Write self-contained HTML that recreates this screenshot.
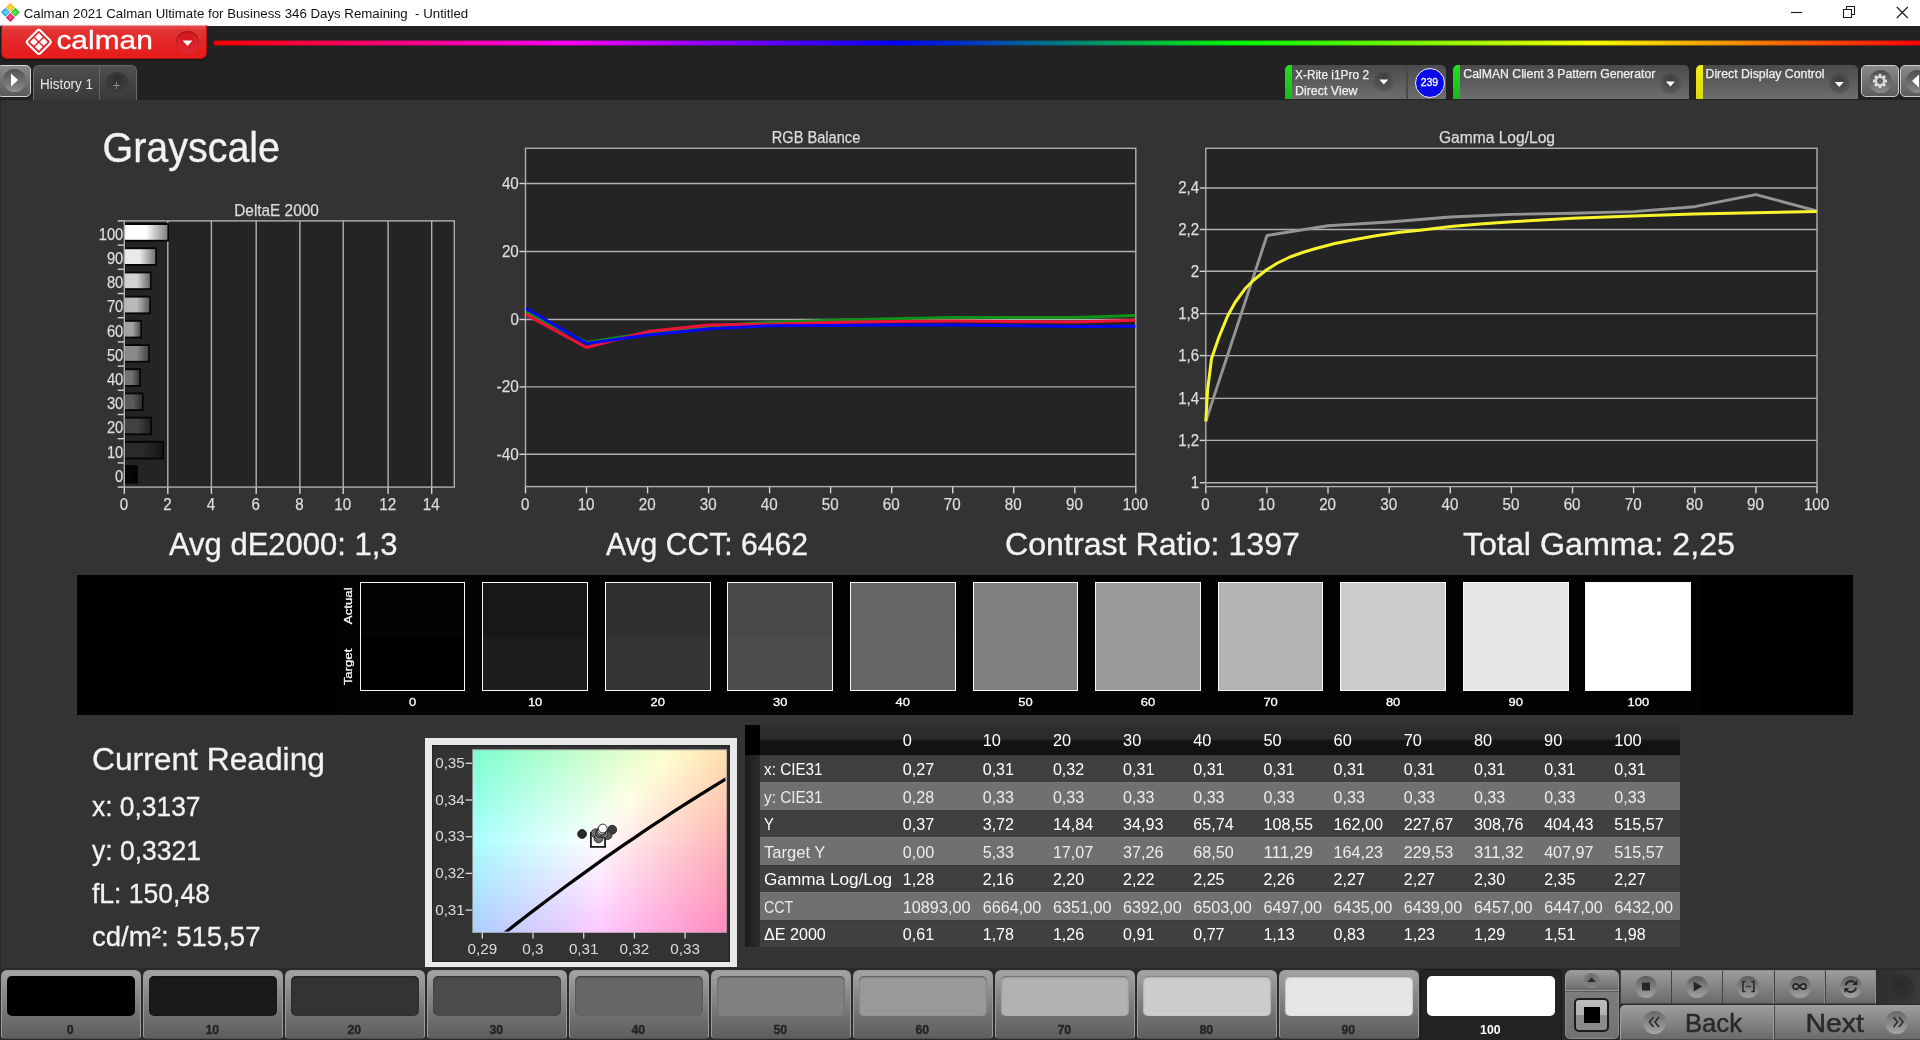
<!DOCTYPE html>
<html lang="en"><head><meta charset="utf-8"><title>Calman 2021 Calman Ultimate for Business - Untitled</title>
<style>
html,body{margin:0;padding:0;background:#333;overflow:hidden}
body{width:1920px;height:1040px;position:relative;font-family:"Liberation Sans", sans-serif;}
#app{position:absolute;left:0;top:0;width:1920px;height:1040px;overflow:hidden;background:#333333}
#app div{position:absolute;box-sizing:border-box}
#ov{position:absolute;left:0;top:0;width:1920px;height:1040px;font-family:"Liberation Sans", sans-serif;will-change:transform}
#ov text{white-space:pre}
</style></head><body>
<div id="app">
<div style="left:0px;top:0px;width:1920px;height:25.5px;background:#ffffff"></div>
<div style="left:0px;top:25.5px;width:1920px;height:74.5px;background:#222222"></div>
<div style="left:0.5px;top:25.3px;width:206.5px;height:33.6px;background:linear-gradient(#e64a4a 0%,#e33535 12%,#e52727 50%,#e81a1a 100%);border-radius:0 0 6px 6px;border:1px solid #b01016;border-top:1px solid #f0a0a0;box-shadow:0 1px 2px rgba(0,0,0,.6)"></div>
<div style="left:176px;top:31px;width:23px;height:23px;border-radius:50%;background:radial-gradient(circle at 50% 35%,#d0141a,#e8333a);box-shadow:inset 0 1px 2px rgba(90,0,0,.6)"></div>
<div style="left:214px;top:39.6px;width:1706px;height:6.4px;background:linear-gradient(90deg,#ff0000 0%,#ff00ff 21%,#0000ff 40%,#00ff00 60%,#ffff00 81%,#ff0000 100%);border-radius:2px 0 0 2px"></div>
<div style="left:214px;top:39.6px;width:1706px;height:6.4px;background:linear-gradient(rgba(34,34,34,.85),rgba(34,34,34,0) 28%,rgba(34,34,34,0) 72%,rgba(34,34,34,.85))"></div>
<div style="left:-3px;top:65px;width:34px;height:32px;background:linear-gradient(#8a8a8a,#5a5a5a);border:1.4px solid #d4d4d4;border-radius:5px"></div>
<div style="left:3px;top:69px;width:23px;height:23px;border-radius:50%;background:linear-gradient(#525252,#747474 60%,#909090)"></div>
<div style="left:33px;top:65px;width:104.3px;height:35px;background:linear-gradient(#505050,#434343 50%,#3a3a3a);border:1.5px solid #6a6a6a;border-bottom:none;border-radius:6px 6px 0 0"></div>
<div style="left:98.8px;top:66px;width:1.5px;height:34px;background:#626262"></div>
<div style="left:105px;top:72px;width:24px;height:24px;border-radius:50%;background:radial-gradient(circle at 50% 30%,#303030,#454545)"></div>
<div style="left:1285px;top:65px;width:161px;height:34.2px;background:linear-gradient(#4b4b4b 0%,#5a5a5a 45%,#6e6e6e 100%);border-radius:5px 5px 0 0"></div>
<div style="left:1285px;top:65px;width:7px;height:34.2px;background:linear-gradient(#22e022,#18b818);border-radius:5px 0 0 0"></div>
<div style="left:1373.3px;top:70.5px;width:21px;height:21px;border-radius:50%;background:radial-gradient(circle at 50% 30%,#3e3e3e,#646464)"></div>
<div style="left:1406px;top:68px;width:1.5px;height:31.2px;background:#4a4a4a"></div>
<div style="left:1414.5px;top:67.5px;width:30px;height:30px;border-radius:50%;background:#0a0ae6;border:1.5px solid #f0f0f8"></div>
<div style="left:1453px;top:65px;width:236px;height:34.2px;background:linear-gradient(#4b4b4b 0%,#5a5a5a 45%,#6e6e6e 100%);border-radius:5px 5px 0 0"></div>
<div style="left:1453px;top:65px;width:7px;height:34.2px;background:linear-gradient(#22e022,#18b818);border-radius:5px 0 0 0"></div>
<div style="left:1659.9px;top:72.5px;width:21px;height:21px;border-radius:50%;background:radial-gradient(circle at 50% 30%,#3e3e3e,#646464)"></div>
<div style="left:1696px;top:65px;width:161.5px;height:34.2px;background:linear-gradient(#4b4b4b 0%,#5a5a5a 45%,#6e6e6e 100%);border-radius:5px 5px 0 0"></div>
<div style="left:1696px;top:65px;width:7px;height:34.2px;background:linear-gradient(#f0f018,#d8d810);border-radius:5px 0 0 0"></div>
<div style="left:1828.7px;top:72.9px;width:21px;height:21px;border-radius:50%;background:radial-gradient(circle at 50% 30%,#3e3e3e,#646464)"></div>
<div style="left:1861px;top:65px;width:38.2px;height:32px;background:linear-gradient(#8a8a8a,#5c5c5c);border:1.3px solid #cccccc;border-radius:5px"></div>
<div style="left:1868.5px;top:69.5px;width:23px;height:23px;border-radius:50%;background:linear-gradient(#4e4e4e,#6e6e6e 60%,#8c8c8c)"></div>
<div style="left:1899.8px;top:65px;width:30px;height:32px;background:linear-gradient(#8a8a8a,#5c5c5c);border:1.3px solid #cccccc;border-radius:5px"></div>
<div style="left:1906px;top:69.5px;width:23px;height:23px;border-radius:50%;background:linear-gradient(#4e4e4e,#6e6e6e 60%,#8c8c8c)"></div>
<div style="left:0px;top:100px;width:1px;height:868px;background:#2b2b2b"></div>
<div style="left:124px;top:221px;width:331px;height:266px;background:#242424"></div>
<div style="left:525px;top:148px;width:611px;height:339px;background:#242424"></div>
<div style="left:1205px;top:148px;width:612px;height:339px;background:#242424"></div>
<div style="left:77px;top:575.4px;width:1776px;height:139.3px;background:#000000"></div>
<div style="left:338px;top:575.4px;width:1362px;height:137.5px;background:#020202"></div>
<div style="left:359.6px;top:581.9px;width:105.8px;height:109.2px;border:1.8px solid #f8f8f8;background:linear-gradient(#030305 0%,#030305 50%,#000000 50%,#000000 100%)"></div>
<div style="left:482.2px;top:581.9px;width:105.8px;height:109.2px;border:1.8px solid #f8f8f8;background:linear-gradient(#171717 0%,#171717 50%,#1c1c1c 50%,#1c1c1c 100%)"></div>
<div style="left:604.8px;top:581.9px;width:105.8px;height:109.2px;border:1.8px solid #f8f8f8;background:linear-gradient(#313031 0%,#313031 50%,#343434 50%,#343434 100%)"></div>
<div style="left:727.3px;top:581.9px;width:105.8px;height:109.2px;border:1.8px solid #f8f8f8;background:linear-gradient(#4a4a4a 0%,#4a4a4a 50%,#4d4d4d 50%,#4d4d4d 100%)"></div>
<div style="left:849.9px;top:581.9px;width:105.8px;height:109.2px;border:1.8px solid #f8f8f8;background:linear-gradient(#656565 0%,#656565 50%,#676767 50%,#676767 100%)"></div>
<div style="left:972.5px;top:581.9px;width:105.8px;height:109.2px;border:1.8px solid #f8f8f8;background:linear-gradient(#808080 0%,#808080 50%,#818181 50%,#818181 100%)"></div>
<div style="left:1095.1px;top:581.9px;width:105.8px;height:109.2px;border:1.8px solid #f8f8f8;background:linear-gradient(#999999 0%,#999999 50%,#9a9a9a 50%,#9a9a9a 100%)"></div>
<div style="left:1217.7px;top:581.9px;width:105.8px;height:109.2px;border:1.8px solid #f8f8f8;background:linear-gradient(#b3b3b1 0%,#b3b3b1 50%,#b3b3b3 50%,#b3b3b3 100%)"></div>
<div style="left:1340.2px;top:581.9px;width:105.8px;height:109.2px;border:1.8px solid #f8f8f8;background:linear-gradient(#cccccb 0%,#cccccb 50%,#cccccc 50%,#cccccc 100%)"></div>
<div style="left:1462.8px;top:581.9px;width:105.8px;height:109.2px;border:1.8px solid #f8f8f8;background:linear-gradient(#e5e6e4 0%,#e5e6e4 50%,#e6e6e6 50%,#e6e6e6 100%)"></div>
<div style="left:1585.4px;top:581.9px;width:105.8px;height:109.2px;border:1.8px solid #f8f8f8;background:linear-gradient(#fffffd 0%,#fffffd 50%,#ffffff 50%,#ffffff 100%)"></div>
<div style="left:425px;top:738px;width:312px;height:229px;background:#e9e9e9"></div>
<div style="left:432px;top:745px;width:298px;height:217px;background:#333333;box-shadow:inset 0 0 2px #000"></div>
<div style="left:472px;top:749.2px;width:255.4px;height:183.6px;background:#8c8c8c"></div>
<div style="left:745px;top:725px;width:935px;height:29.5px;background:linear-gradient(#2e2e2e 0%,#2a2a2a 48%,#141414 50%,#101010 100%)"></div>
<div style="left:745px;top:725px;width:15px;height:29.5px;background:#000000"></div>
<div style="left:760px;top:754.5px;width:920px;height:27.5px;background:#404040;border-top:1px solid #3a3a3a"></div>
<div style="left:745px;top:754.5px;width:15px;height:27.5px;background:linear-gradient(90deg,#1c1c1c,#2c2c2c)"></div>
<div style="left:760px;top:782.0px;width:920px;height:27.5px;background:#707070;border-top:1px solid #787878"></div>
<div style="left:745px;top:782.0px;width:15px;height:27.5px;background:linear-gradient(90deg,#1c1c1c,#2c2c2c)"></div>
<div style="left:760px;top:809.5px;width:920px;height:27.5px;background:#404040;border-top:1px solid #3a3a3a"></div>
<div style="left:745px;top:809.5px;width:15px;height:27.5px;background:linear-gradient(90deg,#1c1c1c,#2c2c2c)"></div>
<div style="left:760px;top:837.0px;width:920px;height:27.5px;background:#707070;border-top:1px solid #787878"></div>
<div style="left:745px;top:837.0px;width:15px;height:27.5px;background:linear-gradient(90deg,#1c1c1c,#2c2c2c)"></div>
<div style="left:760px;top:864.5px;width:920px;height:27.5px;background:#404040;border-top:1px solid #3a3a3a"></div>
<div style="left:745px;top:864.5px;width:15px;height:27.5px;background:linear-gradient(90deg,#1c1c1c,#2c2c2c)"></div>
<div style="left:760px;top:892.0px;width:920px;height:27.5px;background:#707070;border-top:1px solid #787878"></div>
<div style="left:745px;top:892.0px;width:15px;height:27.5px;background:linear-gradient(90deg,#1c1c1c,#2c2c2c)"></div>
<div style="left:760px;top:919.5px;width:920px;height:27.5px;background:#404040;border-top:1px solid #3a3a3a"></div>
<div style="left:745px;top:919.5px;width:15px;height:27.5px;background:linear-gradient(90deg,#1c1c1c,#2c2c2c)"></div>
<div style="left:0px;top:968px;width:1920px;height:72px;background:#2a2a2a"></div>
<div style="left:1.3px;top:970px;width:140.2px;height:68.8px;background:linear-gradient(#a4a4a4 0%,#8c8c8c 30%,#6c6c6c 75%,#5e5e5e 100%);border-radius:6px 6px 4px 4px;border:1px solid #9c9c9c;border-bottom-color:#4c4c4c"></div>
<div style="left:7.0px;top:975.6px;width:128.4px;height:40.5px;background:rgb(0,0,0);border-radius:5px;box-shadow:inset 0 1px 2px rgba(0,0,0,.45),0 0 1px rgba(255,255,255,.25)"></div>
<div style="left:143.3px;top:970px;width:140.2px;height:68.8px;background:linear-gradient(#a4a4a4 0%,#8c8c8c 30%,#6c6c6c 75%,#5e5e5e 100%);border-radius:6px 6px 4px 4px;border:1px solid #9c9c9c;border-bottom-color:#4c4c4c"></div>
<div style="left:149.0px;top:975.6px;width:128.4px;height:40.5px;background:rgb(26,26,26);border-radius:5px;box-shadow:inset 0 1px 2px rgba(0,0,0,.45),0 0 1px rgba(255,255,255,.25)"></div>
<div style="left:285.3px;top:970px;width:140.2px;height:68.8px;background:linear-gradient(#a4a4a4 0%,#8c8c8c 30%,#6c6c6c 75%,#5e5e5e 100%);border-radius:6px 6px 4px 4px;border:1px solid #9c9c9c;border-bottom-color:#4c4c4c"></div>
<div style="left:291.0px;top:975.6px;width:128.4px;height:40.5px;background:rgb(51,51,51);border-radius:5px;box-shadow:inset 0 1px 2px rgba(0,0,0,.45),0 0 1px rgba(255,255,255,.25)"></div>
<div style="left:427.3px;top:970px;width:140.2px;height:68.8px;background:linear-gradient(#a4a4a4 0%,#8c8c8c 30%,#6c6c6c 75%,#5e5e5e 100%);border-radius:6px 6px 4px 4px;border:1px solid #9c9c9c;border-bottom-color:#4c4c4c"></div>
<div style="left:433.0px;top:975.6px;width:128.4px;height:40.5px;background:rgb(76,76,76);border-radius:5px;box-shadow:inset 0 1px 2px rgba(0,0,0,.45),0 0 1px rgba(255,255,255,.25)"></div>
<div style="left:569.3px;top:970px;width:140.2px;height:68.8px;background:linear-gradient(#a4a4a4 0%,#8c8c8c 30%,#6c6c6c 75%,#5e5e5e 100%);border-radius:6px 6px 4px 4px;border:1px solid #9c9c9c;border-bottom-color:#4c4c4c"></div>
<div style="left:575.0px;top:975.6px;width:128.4px;height:40.5px;background:rgb(102,102,102);border-radius:5px;box-shadow:inset 0 1px 2px rgba(0,0,0,.45),0 0 1px rgba(255,255,255,.25)"></div>
<div style="left:711.3px;top:970px;width:140.2px;height:68.8px;background:linear-gradient(#a4a4a4 0%,#8c8c8c 30%,#6c6c6c 75%,#5e5e5e 100%);border-radius:6px 6px 4px 4px;border:1px solid #9c9c9c;border-bottom-color:#4c4c4c"></div>
<div style="left:717.0px;top:975.6px;width:128.4px;height:40.5px;background:rgb(128,128,128);border-radius:5px;box-shadow:inset 0 1px 2px rgba(0,0,0,.45),0 0 1px rgba(255,255,255,.25)"></div>
<div style="left:853.3px;top:970px;width:140.2px;height:68.8px;background:linear-gradient(#a4a4a4 0%,#8c8c8c 30%,#6c6c6c 75%,#5e5e5e 100%);border-radius:6px 6px 4px 4px;border:1px solid #9c9c9c;border-bottom-color:#4c4c4c"></div>
<div style="left:859.0px;top:975.6px;width:128.4px;height:40.5px;background:rgb(153,153,153);border-radius:5px;box-shadow:inset 0 1px 2px rgba(0,0,0,.45),0 0 1px rgba(255,255,255,.25)"></div>
<div style="left:995.3px;top:970px;width:140.2px;height:68.8px;background:linear-gradient(#a4a4a4 0%,#8c8c8c 30%,#6c6c6c 75%,#5e5e5e 100%);border-radius:6px 6px 4px 4px;border:1px solid #9c9c9c;border-bottom-color:#4c4c4c"></div>
<div style="left:1001.0px;top:975.6px;width:128.4px;height:40.5px;background:rgb(178,178,178);border-radius:5px;box-shadow:inset 0 1px 2px rgba(0,0,0,.45),0 0 1px rgba(255,255,255,.25)"></div>
<div style="left:1137.3px;top:970px;width:140.2px;height:68.8px;background:linear-gradient(#a4a4a4 0%,#8c8c8c 30%,#6c6c6c 75%,#5e5e5e 100%);border-radius:6px 6px 4px 4px;border:1px solid #9c9c9c;border-bottom-color:#4c4c4c"></div>
<div style="left:1143.0px;top:975.6px;width:128.4px;height:40.5px;background:rgb(204,204,204);border-radius:5px;box-shadow:inset 0 1px 2px rgba(0,0,0,.45),0 0 1px rgba(255,255,255,.25)"></div>
<div style="left:1279.3px;top:970px;width:140.2px;height:68.8px;background:linear-gradient(#a4a4a4 0%,#8c8c8c 30%,#6c6c6c 75%,#5e5e5e 100%);border-radius:6px 6px 4px 4px;border:1px solid #9c9c9c;border-bottom-color:#4c4c4c"></div>
<div style="left:1285.0px;top:975.6px;width:128.4px;height:40.5px;background:rgb(230,230,230);border-radius:5px;box-shadow:inset 0 1px 2px rgba(0,0,0,.45),0 0 1px rgba(255,255,255,.25)"></div>
<div style="left:1420.3px;top:969px;width:142px;height:72px;background:#232323;border-radius:6px 6px 0 0;border:1px solid #1a1a1a;border-bottom:none"></div>
<div style="left:1427.0px;top:975.6px;width:128.4px;height:40.5px;background:#ffffff;border-radius:5px"></div>
<div style="left:1565px;top:970px;width:54px;height:21px;background:linear-gradient(#9c9c9c 0%,#868686 45%,#6a6a6a 100%);border-radius:6px 6px 0 0;border:1px solid #989898"></div>
<div style="left:1583px;top:972.5px;width:17px;height:15px;border-radius:50%;background:radial-gradient(circle at 50% 30%,#6c6c6c,#8a8a8a)"></div>
<div style="left:1565px;top:991px;width:54px;height:48px;background:linear-gradient(#7c7c7c,#727272);border:1px solid #8a8a8a;border-top:1px solid #5a5a5a;border-radius:0 0 5px 5px"></div>
<div style="left:1574px;top:998px;width:35px;height:34px;background:linear-gradient(#bdbdbd 0%,#b0b0b0 49%,#8e8e8e 50%,#8a8a8a 100%);border:2px solid #1c1c1c;border-radius:5px"></div>
<div style="left:1583.5px;top:1007px;width:16px;height:16px;background:#000000"></div>
<div style="left:1620.0px;top:970px;width:51.5px;height:34px;background:linear-gradient(#9c9c9c 0%,#868686 45%,#6a6a6a 100%);border:1px solid #8c8c8c;border-left-color:#444444;border-right-color:#8e8e8e;border-bottom-color:#4a4a4a"></div>
<div style="left:1635.0px;top:975.5px;width:22px;height:22px;border-radius:50%;background:linear-gradient(#5c5c5c,#8a8a8a 65%,#a2a2a2)"></div>
<div style="left:1671.2px;top:970px;width:51.5px;height:34px;background:linear-gradient(#9c9c9c 0%,#868686 45%,#6a6a6a 100%);border:1px solid #8c8c8c;border-left-color:#444444;border-right-color:#8e8e8e;border-bottom-color:#4a4a4a"></div>
<div style="left:1686.2px;top:975.5px;width:22px;height:22px;border-radius:50%;background:linear-gradient(#5c5c5c,#8a8a8a 65%,#a2a2a2)"></div>
<div style="left:1722.4px;top:970px;width:51.5px;height:34px;background:linear-gradient(#9c9c9c 0%,#868686 45%,#6a6a6a 100%);border:1px solid #8c8c8c;border-left-color:#444444;border-right-color:#8e8e8e;border-bottom-color:#4a4a4a"></div>
<div style="left:1737.4px;top:975.5px;width:22px;height:22px;border-radius:50%;background:linear-gradient(#5c5c5c,#8a8a8a 65%,#a2a2a2)"></div>
<div style="left:1773.6px;top:970px;width:51.5px;height:34px;background:linear-gradient(#9c9c9c 0%,#868686 45%,#6a6a6a 100%);border:1px solid #8c8c8c;border-left-color:#444444;border-right-color:#8e8e8e;border-bottom-color:#4a4a4a"></div>
<div style="left:1788.6px;top:975.5px;width:22px;height:22px;border-radius:50%;background:linear-gradient(#5c5c5c,#8a8a8a 65%,#a2a2a2)"></div>
<div style="left:1824.8px;top:970px;width:51.5px;height:34px;background:linear-gradient(#9c9c9c 0%,#868686 45%,#6a6a6a 100%);border:1px solid #8c8c8c;border-left-color:#444444;border-right-color:#8e8e8e;border-bottom-color:#4a4a4a"></div>
<div style="left:1839.8px;top:975.5px;width:22px;height:22px;border-radius:50%;background:linear-gradient(#5c5c5c,#8a8a8a 65%,#a2a2a2)"></div>
<div style="left:1876px;top:970px;width:44px;height:34px;background:linear-gradient(90deg,#2e2e2e,#3a3a3a)"></div>
<div style="left:1889px;top:975px;width:25px;height:25px;border-radius:50%;background:radial-gradient(circle at 50% 40%,#2a2a2a,#353535)"></div>
<div style="left:1620px;top:1005px;width:154px;height:35px;background:linear-gradient(#9c9c9c 0%,#868686 45%,#6a6a6a 100%);border:1px solid #a0a0a0;border-radius:5px 0 0 0;border-bottom-color:#4a4a4a"></div>
<div style="left:1774px;top:1005px;width:150px;height:35px;background:linear-gradient(#9c9c9c 0%,#868686 45%,#6a6a6a 100%);border:1px solid #a0a0a0;border-left-color:#444444;border-bottom-color:#4a4a4a"></div>
<div style="left:1643px;top:1010.5px;width:23px;height:23px;border-radius:50%;background:linear-gradient(#686868,#909090 65%,#a6a6a6)"></div>
<div style="left:1885px;top:1010.5px;width:23px;height:23px;border-radius:50%;background:linear-gradient(#686868,#909090 65%,#a6a6a6)"></div>
<svg id="ov" width="1920" height="1040" viewBox="0 0 1920 1040">
<defs>
<linearGradient id="bar100" x1="0" x2="1" y1="0" y2="0"><stop offset="0" stop-color="rgb(247,247,247)"/><stop offset="0.12" stop-color="rgb(255,255,255)"/><stop offset="0.5" stop-color="rgb(255,255,255)"/><stop offset="1" stop-color="rgb(128,128,128)"/></linearGradient>
<linearGradient id="bar90" x1="0" x2="1" y1="0" y2="0"><stop offset="0" stop-color="rgb(227,227,227)"/><stop offset="0.12" stop-color="rgb(234,234,234)"/><stop offset="0.5" stop-color="rgb(234,234,234)"/><stop offset="1" stop-color="rgb(117,117,117)"/></linearGradient>
<linearGradient id="bar80" x1="0" x2="1" y1="0" y2="0"><stop offset="0" stop-color="rgb(204,204,204)"/><stop offset="0.12" stop-color="rgb(210,210,210)"/><stop offset="0.5" stop-color="rgb(210,210,210)"/><stop offset="1" stop-color="rgb(105,105,105)"/></linearGradient>
<linearGradient id="bar70" x1="0" x2="1" y1="0" y2="0"><stop offset="0" stop-color="rgb(180,180,180)"/><stop offset="0.12" stop-color="rgb(186,186,186)"/><stop offset="0.5" stop-color="rgb(186,186,186)"/><stop offset="1" stop-color="rgb(93,93,93)"/></linearGradient>
<linearGradient id="bar60" x1="0" x2="1" y1="0" y2="0"><stop offset="0" stop-color="rgb(157,157,157)"/><stop offset="0.12" stop-color="rgb(162,162,162)"/><stop offset="0.5" stop-color="rgb(162,162,162)"/><stop offset="1" stop-color="rgb(81,81,81)"/></linearGradient>
<linearGradient id="bar50" x1="0" x2="1" y1="0" y2="0"><stop offset="0" stop-color="rgb(134,134,134)"/><stop offset="0.12" stop-color="rgb(138,138,138)"/><stop offset="0.5" stop-color="rgb(138,138,138)"/><stop offset="1" stop-color="rgb(69,69,69)"/></linearGradient>
<linearGradient id="bar40" x1="0" x2="1" y1="0" y2="0"><stop offset="0" stop-color="rgb(111,111,111)"/><stop offset="0.12" stop-color="rgb(114,114,114)"/><stop offset="0.5" stop-color="rgb(114,114,114)"/><stop offset="1" stop-color="rgb(57,57,57)"/></linearGradient>
<linearGradient id="bar30" x1="0" x2="1" y1="0" y2="0"><stop offset="0" stop-color="rgb(87,87,87)"/><stop offset="0.12" stop-color="rgb(90,90,90)"/><stop offset="0.5" stop-color="rgb(90,90,90)"/><stop offset="1" stop-color="rgb(45,45,45)"/></linearGradient>
<linearGradient id="bar20" x1="0" x2="1" y1="0" y2="0"><stop offset="0" stop-color="rgb(64,64,64)"/><stop offset="0.12" stop-color="rgb(66,66,66)"/><stop offset="0.5" stop-color="rgb(66,66,66)"/><stop offset="1" stop-color="rgb(33,33,33)"/></linearGradient>
<linearGradient id="bar10" x1="0" x2="1" y1="0" y2="0"><stop offset="0" stop-color="rgb(41,41,41)"/><stop offset="0.12" stop-color="rgb(42,42,42)"/><stop offset="0.5" stop-color="rgb(42,42,42)"/><stop offset="1" stop-color="rgb(21,21,21)"/></linearGradient>
<linearGradient id="bar0" x1="0" x2="1" y1="0" y2="0"><stop offset="0" stop-color="rgb(6,6,6)"/><stop offset="0.12" stop-color="rgb(6,6,6)"/><stop offset="0.5" stop-color="rgb(6,6,6)"/><stop offset="1" stop-color="rgb(3,3,3)"/></linearGradient>
<linearGradient id="cs0"><stop offset="0.0" stop-color="#7dffd0"/><stop offset="0.12" stop-color="#93ffcf"/><stop offset="0.25" stop-color="#a9ffce"/><stop offset="0.38" stop-color="#beffce"/><stop offset="0.5" stop-color="#d2ffcd"/><stop offset="0.62" stop-color="#e6ffcc"/><stop offset="0.75" stop-color="#faffcb"/><stop offset="0.88" stop-color="#fff1bd"/><stop offset="1.0" stop-color="#ffdfac"/></linearGradient>
<linearGradient id="cs1"><stop offset="0.0" stop-color="#7effd1"/><stop offset="0.12" stop-color="#94ffd1"/><stop offset="0.25" stop-color="#aaffd0"/><stop offset="0.38" stop-color="#bfffcf"/><stop offset="0.5" stop-color="#d4ffce"/><stop offset="0.62" stop-color="#e8ffcd"/><stop offset="0.75" stop-color="#fbffcd"/><stop offset="0.88" stop-color="#fff0be"/><stop offset="1.0" stop-color="#ffdead"/></linearGradient>
<linearGradient id="cs2"><stop offset="0.0" stop-color="#7fffd3"/><stop offset="0.12" stop-color="#96ffd2"/><stop offset="0.25" stop-color="#abffd2"/><stop offset="0.38" stop-color="#c1ffd1"/><stop offset="0.5" stop-color="#d5ffd0"/><stop offset="0.62" stop-color="#e9ffcf"/><stop offset="0.75" stop-color="#fdffce"/><stop offset="0.88" stop-color="#ffeebe"/><stop offset="1.0" stop-color="#ffddad"/></linearGradient>
<linearGradient id="cs3"><stop offset="0.0" stop-color="#81ffd5"/><stop offset="0.12" stop-color="#97ffd4"/><stop offset="0.25" stop-color="#adffd3"/><stop offset="0.38" stop-color="#c2ffd2"/><stop offset="0.5" stop-color="#d7ffd2"/><stop offset="0.62" stop-color="#ebffd1"/><stop offset="0.75" stop-color="#feffd0"/><stop offset="0.88" stop-color="#ffedbe"/><stop offset="1.0" stop-color="#ffdbad"/></linearGradient>
<linearGradient id="cs4"><stop offset="0.0" stop-color="#82ffd6"/><stop offset="0.12" stop-color="#99ffd5"/><stop offset="0.25" stop-color="#aeffd5"/><stop offset="0.38" stop-color="#c3ffd4"/><stop offset="0.5" stop-color="#d8ffd3"/><stop offset="0.62" stop-color="#ecffd2"/><stop offset="0.75" stop-color="#fffed1"/><stop offset="0.88" stop-color="#ffebbf"/><stop offset="1.0" stop-color="#ffdaae"/></linearGradient>
<linearGradient id="cs5"><stop offset="0.0" stop-color="#84ffd8"/><stop offset="0.12" stop-color="#9affd7"/><stop offset="0.25" stop-color="#b0ffd6"/><stop offset="0.38" stop-color="#c5ffd6"/><stop offset="0.5" stop-color="#daffd5"/><stop offset="0.62" stop-color="#eeffd4"/><stop offset="0.75" stop-color="#fffcd1"/><stop offset="0.88" stop-color="#ffeabf"/><stop offset="1.0" stop-color="#ffd8ae"/></linearGradient>
<linearGradient id="cs6"><stop offset="0.0" stop-color="#85ffd9"/><stop offset="0.12" stop-color="#9cffd9"/><stop offset="0.25" stop-color="#b1ffd8"/><stop offset="0.38" stop-color="#c6ffd7"/><stop offset="0.5" stop-color="#dbffd7"/><stop offset="0.62" stop-color="#efffd6"/><stop offset="0.75" stop-color="#fffbd1"/><stop offset="0.88" stop-color="#ffe8bf"/><stop offset="1.0" stop-color="#ffd7ae"/></linearGradient>
<linearGradient id="cs7"><stop offset="0.0" stop-color="#87ffdb"/><stop offset="0.12" stop-color="#9dffda"/><stop offset="0.25" stop-color="#b3ffd9"/><stop offset="0.38" stop-color="#c8ffd9"/><stop offset="0.5" stop-color="#ddffd8"/><stop offset="0.62" stop-color="#f1ffd7"/><stop offset="0.75" stop-color="#fff9d1"/><stop offset="0.88" stop-color="#ffe7bf"/><stop offset="1.0" stop-color="#ffd5af"/></linearGradient>
<linearGradient id="cs8"><stop offset="0.0" stop-color="#88ffdc"/><stop offset="0.12" stop-color="#9fffdc"/><stop offset="0.25" stop-color="#b4ffdb"/><stop offset="0.38" stop-color="#c9ffda"/><stop offset="0.5" stop-color="#deffda"/><stop offset="0.62" stop-color="#f2ffd9"/><stop offset="0.75" stop-color="#fff8d2"/><stop offset="0.88" stop-color="#ffe5c0"/><stop offset="1.0" stop-color="#ffd4af"/></linearGradient>
<linearGradient id="cs9"><stop offset="0.0" stop-color="#8affde"/><stop offset="0.12" stop-color="#a0ffdd"/><stop offset="0.25" stop-color="#b6ffdd"/><stop offset="0.38" stop-color="#cbffdc"/><stop offset="0.5" stop-color="#e0ffdc"/><stop offset="0.62" stop-color="#f4ffdb"/><stop offset="0.75" stop-color="#fff6d2"/><stop offset="0.88" stop-color="#ffe4c0"/><stop offset="1.0" stop-color="#ffd2af"/></linearGradient>
<linearGradient id="cs10"><stop offset="0.0" stop-color="#8bffdf"/><stop offset="0.12" stop-color="#a2ffdf"/><stop offset="0.25" stop-color="#b7ffde"/><stop offset="0.38" stop-color="#ccffde"/><stop offset="0.5" stop-color="#e1ffdd"/><stop offset="0.62" stop-color="#f6ffdd"/><stop offset="0.75" stop-color="#fff5d2"/><stop offset="0.88" stop-color="#ffe2c0"/><stop offset="1.0" stop-color="#ffd1b0"/></linearGradient>
<linearGradient id="cs11"><stop offset="0.0" stop-color="#8dffe1"/><stop offset="0.12" stop-color="#a3ffe0"/><stop offset="0.25" stop-color="#b9ffe0"/><stop offset="0.38" stop-color="#ceffdf"/><stop offset="0.5" stop-color="#e3ffdf"/><stop offset="0.62" stop-color="#f7ffde"/><stop offset="0.75" stop-color="#fff3d2"/><stop offset="0.88" stop-color="#ffe1c1"/><stop offset="1.0" stop-color="#ffd0b0"/></linearGradient>
<linearGradient id="cs12"><stop offset="0.0" stop-color="#8effe3"/><stop offset="0.12" stop-color="#a4ffe2"/><stop offset="0.25" stop-color="#baffe2"/><stop offset="0.38" stop-color="#d0ffe1"/><stop offset="0.5" stop-color="#e4ffe1"/><stop offset="0.62" stop-color="#f9ffe0"/><stop offset="0.75" stop-color="#fff1d3"/><stop offset="0.88" stop-color="#ffdfc1"/><stop offset="1.0" stop-color="#ffceb0"/></linearGradient>
<linearGradient id="cs13"><stop offset="0.0" stop-color="#8fffe4"/><stop offset="0.12" stop-color="#a6ffe4"/><stop offset="0.25" stop-color="#bcffe3"/><stop offset="0.38" stop-color="#d1ffe3"/><stop offset="0.5" stop-color="#e6ffe2"/><stop offset="0.62" stop-color="#faffe2"/><stop offset="0.75" stop-color="#fff0d3"/><stop offset="0.88" stop-color="#ffdec1"/><stop offset="1.0" stop-color="#ffcdb1"/></linearGradient>
<linearGradient id="cs14"><stop offset="0.0" stop-color="#91ffe6"/><stop offset="0.12" stop-color="#a7ffe5"/><stop offset="0.25" stop-color="#bdffe5"/><stop offset="0.38" stop-color="#d3ffe4"/><stop offset="0.5" stop-color="#e7ffe4"/><stop offset="0.62" stop-color="#fcffe4"/><stop offset="0.75" stop-color="#ffeed3"/><stop offset="0.88" stop-color="#ffdcc1"/><stop offset="1.0" stop-color="#ffcbb1"/></linearGradient>
<linearGradient id="cs15"><stop offset="0.0" stop-color="#92ffe7"/><stop offset="0.12" stop-color="#a9ffe7"/><stop offset="0.25" stop-color="#bfffe7"/><stop offset="0.38" stop-color="#d4ffe6"/><stop offset="0.5" stop-color="#e9ffe6"/><stop offset="0.62" stop-color="#feffe5"/><stop offset="0.75" stop-color="#ffedd3"/><stop offset="0.88" stop-color="#ffdbc2"/><stop offset="1.0" stop-color="#ffcab1"/></linearGradient>
<linearGradient id="cs16"><stop offset="0.0" stop-color="#94ffe9"/><stop offset="0.12" stop-color="#aaffe9"/><stop offset="0.25" stop-color="#c0ffe8"/><stop offset="0.38" stop-color="#d6ffe8"/><stop offset="0.5" stop-color="#ebffe7"/><stop offset="0.62" stop-color="#ffffe7"/><stop offset="0.75" stop-color="#ffebd4"/><stop offset="0.88" stop-color="#ffd9c2"/><stop offset="1.0" stop-color="#ffc8b2"/></linearGradient>
<linearGradient id="cs17"><stop offset="0.0" stop-color="#95ffeb"/><stop offset="0.12" stop-color="#acffea"/><stop offset="0.25" stop-color="#c2ffea"/><stop offset="0.38" stop-color="#d7ffe9"/><stop offset="0.5" stop-color="#ecffe9"/><stop offset="0.62" stop-color="#fffde7"/><stop offset="0.75" stop-color="#ffead4"/><stop offset="0.88" stop-color="#ffd8c2"/><stop offset="1.0" stop-color="#ffc7b2"/></linearGradient>
<linearGradient id="cs18"><stop offset="0.0" stop-color="#97ffec"/><stop offset="0.12" stop-color="#aeffec"/><stop offset="0.25" stop-color="#c3ffec"/><stop offset="0.38" stop-color="#d9ffeb"/><stop offset="0.5" stop-color="#eeffeb"/><stop offset="0.62" stop-color="#fffce7"/><stop offset="0.75" stop-color="#ffe8d4"/><stop offset="0.88" stop-color="#ffd6c3"/><stop offset="1.0" stop-color="#ffc6b2"/></linearGradient>
<linearGradient id="cs19"><stop offset="0.0" stop-color="#98ffee"/><stop offset="0.12" stop-color="#afffed"/><stop offset="0.25" stop-color="#c5ffed"/><stop offset="0.38" stop-color="#daffed"/><stop offset="0.5" stop-color="#efffed"/><stop offset="0.62" stop-color="#fffae7"/><stop offset="0.75" stop-color="#ffe7d4"/><stop offset="0.88" stop-color="#ffd5c3"/><stop offset="1.0" stop-color="#ffc4b2"/></linearGradient>
<linearGradient id="cs20"><stop offset="0.0" stop-color="#9affef"/><stop offset="0.12" stop-color="#b1ffef"/><stop offset="0.25" stop-color="#c7ffef"/><stop offset="0.38" stop-color="#dcffef"/><stop offset="0.5" stop-color="#f1ffee"/><stop offset="0.62" stop-color="#fff8e8"/><stop offset="0.75" stop-color="#ffe5d5"/><stop offset="0.88" stop-color="#ffd3c3"/><stop offset="1.0" stop-color="#ffc3b3"/></linearGradient>
<linearGradient id="cs21"><stop offset="0.0" stop-color="#9bfff1"/><stop offset="0.12" stop-color="#b2fff1"/><stop offset="0.25" stop-color="#c8fff1"/><stop offset="0.38" stop-color="#defff0"/><stop offset="0.5" stop-color="#f3fff0"/><stop offset="0.62" stop-color="#fff7e8"/><stop offset="0.75" stop-color="#ffe4d5"/><stop offset="0.88" stop-color="#ffd2c3"/><stop offset="1.0" stop-color="#ffc1b3"/></linearGradient>
<linearGradient id="cs22"><stop offset="0.0" stop-color="#9dfff3"/><stop offset="0.12" stop-color="#b4fff2"/><stop offset="0.25" stop-color="#cafff2"/><stop offset="0.38" stop-color="#dffff2"/><stop offset="0.5" stop-color="#f4fff2"/><stop offset="0.62" stop-color="#fff5e8"/><stop offset="0.75" stop-color="#ffe2d5"/><stop offset="0.88" stop-color="#ffd0c4"/><stop offset="1.0" stop-color="#ffc0b3"/></linearGradient>
<linearGradient id="cs23"><stop offset="0.0" stop-color="#9ffff4"/><stop offset="0.12" stop-color="#b5fff4"/><stop offset="0.25" stop-color="#cbfff4"/><stop offset="0.38" stop-color="#e1fff4"/><stop offset="0.5" stop-color="#f6fff4"/><stop offset="0.62" stop-color="#fff3e8"/><stop offset="0.75" stop-color="#ffe0d5"/><stop offset="0.88" stop-color="#ffcfc4"/><stop offset="1.0" stop-color="#ffbeb4"/></linearGradient>
<linearGradient id="cs24"><stop offset="0.0" stop-color="#a0fff6"/><stop offset="0.12" stop-color="#b7fff6"/><stop offset="0.25" stop-color="#cdfff6"/><stop offset="0.38" stop-color="#e2fff6"/><stop offset="0.5" stop-color="#f8fff5"/><stop offset="0.62" stop-color="#fff2e8"/><stop offset="0.75" stop-color="#ffdfd6"/><stop offset="0.88" stop-color="#ffcdc4"/><stop offset="1.0" stop-color="#ffbdb4"/></linearGradient>
<linearGradient id="cs25"><stop offset="0.0" stop-color="#a2fff8"/><stop offset="0.12" stop-color="#b8fff8"/><stop offset="0.25" stop-color="#cefff7"/><stop offset="0.38" stop-color="#e4fff7"/><stop offset="0.5" stop-color="#f9fff7"/><stop offset="0.62" stop-color="#fff0e9"/><stop offset="0.75" stop-color="#ffddd6"/><stop offset="0.88" stop-color="#ffccc4"/><stop offset="1.0" stop-color="#ffbcb4"/></linearGradient>
<linearGradient id="cs26"><stop offset="0.0" stop-color="#a3fff9"/><stop offset="0.12" stop-color="#bafff9"/><stop offset="0.25" stop-color="#d0fff9"/><stop offset="0.38" stop-color="#e6fff9"/><stop offset="0.5" stop-color="#fbfff9"/><stop offset="0.62" stop-color="#ffefe9"/><stop offset="0.75" stop-color="#ffdcd6"/><stop offset="0.88" stop-color="#ffcac5"/><stop offset="1.0" stop-color="#ffbab5"/></linearGradient>
<linearGradient id="cs27"><stop offset="0.0" stop-color="#a5fffb"/><stop offset="0.12" stop-color="#bbfffb"/><stop offset="0.25" stop-color="#d2fffb"/><stop offset="0.38" stop-color="#e7fffb"/><stop offset="0.5" stop-color="#fdfffb"/><stop offset="0.62" stop-color="#ffede9"/><stop offset="0.75" stop-color="#ffdad6"/><stop offset="0.88" stop-color="#ffc9c5"/><stop offset="1.0" stop-color="#ffb9b5"/></linearGradient>
<linearGradient id="cs28"><stop offset="0.0" stop-color="#a6fffd"/><stop offset="0.12" stop-color="#bdfffd"/><stop offset="0.25" stop-color="#d3fffd"/><stop offset="0.38" stop-color="#e9fffd"/><stop offset="0.5" stop-color="#fefffd"/><stop offset="0.62" stop-color="#ffebe9"/><stop offset="0.75" stop-color="#ffd9d6"/><stop offset="0.88" stop-color="#ffc7c5"/><stop offset="1.0" stop-color="#ffb7b5"/></linearGradient>
<linearGradient id="cs29"><stop offset="0.0" stop-color="#a8fffe"/><stop offset="0.12" stop-color="#bffffe"/><stop offset="0.25" stop-color="#d5fffe"/><stop offset="0.38" stop-color="#ebfffe"/><stop offset="0.5" stop-color="#fffefd"/><stop offset="0.62" stop-color="#ffeae9"/><stop offset="0.75" stop-color="#ffd7d7"/><stop offset="0.88" stop-color="#ffc6c5"/><stop offset="1.0" stop-color="#ffb6b5"/></linearGradient>
<linearGradient id="cs30"><stop offset="0.0" stop-color="#a9feff"/><stop offset="0.12" stop-color="#bffeff"/><stop offset="0.25" stop-color="#d5feff"/><stop offset="0.38" stop-color="#ebfeff"/><stop offset="0.5" stop-color="#fffcfe"/><stop offset="0.62" stop-color="#ffe8e9"/><stop offset="0.75" stop-color="#ffd6d7"/><stop offset="0.88" stop-color="#ffc4c6"/><stop offset="1.0" stop-color="#ffb4b6"/></linearGradient>
<linearGradient id="cs31"><stop offset="0.0" stop-color="#a9fcff"/><stop offset="0.12" stop-color="#bffcff"/><stop offset="0.25" stop-color="#d5fcff"/><stop offset="0.38" stop-color="#ebfcff"/><stop offset="0.5" stop-color="#fffbfe"/><stop offset="0.62" stop-color="#ffe7ea"/><stop offset="0.75" stop-color="#ffd4d7"/><stop offset="0.88" stop-color="#ffc3c6"/><stop offset="1.0" stop-color="#ffb3b6"/></linearGradient>
<linearGradient id="cs32"><stop offset="0.0" stop-color="#a9fbff"/><stop offset="0.12" stop-color="#bffaff"/><stop offset="0.25" stop-color="#d5faff"/><stop offset="0.38" stop-color="#ebfaff"/><stop offset="0.5" stop-color="#fff9fe"/><stop offset="0.62" stop-color="#ffe5ea"/><stop offset="0.75" stop-color="#ffd3d7"/><stop offset="0.88" stop-color="#ffc1c6"/><stop offset="1.0" stop-color="#ffb1b6"/></linearGradient>
<linearGradient id="cs33"><stop offset="0.0" stop-color="#a9f9ff"/><stop offset="0.12" stop-color="#bff9ff"/><stop offset="0.25" stop-color="#d5f9ff"/><stop offset="0.38" stop-color="#ebf8ff"/><stop offset="0.5" stop-color="#fff7fe"/><stop offset="0.62" stop-color="#ffe3ea"/><stop offset="0.75" stop-color="#ffd1d8"/><stop offset="0.88" stop-color="#ffc0c6"/><stop offset="1.0" stop-color="#ffb0b7"/></linearGradient>
<linearGradient id="cs34"><stop offset="0.0" stop-color="#a9f7ff"/><stop offset="0.12" stop-color="#c0f7ff"/><stop offset="0.25" stop-color="#d5f7ff"/><stop offset="0.38" stop-color="#ebf7ff"/><stop offset="0.5" stop-color="#fff6fe"/><stop offset="0.62" stop-color="#ffe2ea"/><stop offset="0.75" stop-color="#ffcfd8"/><stop offset="0.88" stop-color="#ffbec7"/><stop offset="1.0" stop-color="#ffafb7"/></linearGradient>
<linearGradient id="cs35"><stop offset="0.0" stop-color="#a9f5ff"/><stop offset="0.12" stop-color="#c0f5ff"/><stop offset="0.25" stop-color="#d5f5ff"/><stop offset="0.38" stop-color="#ebf5ff"/><stop offset="0.5" stop-color="#fff4fe"/><stop offset="0.62" stop-color="#ffe0ea"/><stop offset="0.75" stop-color="#ffced8"/><stop offset="0.88" stop-color="#ffbdc7"/><stop offset="1.0" stop-color="#ffadb7"/></linearGradient>
<linearGradient id="cs36"><stop offset="0.0" stop-color="#a9f4ff"/><stop offset="0.12" stop-color="#c0f4ff"/><stop offset="0.25" stop-color="#d5f3ff"/><stop offset="0.38" stop-color="#ebf3ff"/><stop offset="0.5" stop-color="#fff2fe"/><stop offset="0.62" stop-color="#ffdfeb"/><stop offset="0.75" stop-color="#ffccd8"/><stop offset="0.88" stop-color="#ffbbc7"/><stop offset="1.0" stop-color="#ffacb7"/></linearGradient>
<linearGradient id="cs37"><stop offset="0.0" stop-color="#a9f2ff"/><stop offset="0.12" stop-color="#c0f2ff"/><stop offset="0.25" stop-color="#d5f2ff"/><stop offset="0.38" stop-color="#ebf1ff"/><stop offset="0.5" stop-color="#fff1ff"/><stop offset="0.62" stop-color="#ffddeb"/><stop offset="0.75" stop-color="#ffcbd8"/><stop offset="0.88" stop-color="#ffbac8"/><stop offset="1.0" stop-color="#ffaab8"/></linearGradient>
<linearGradient id="cs38"><stop offset="0.0" stop-color="#aaf0ff"/><stop offset="0.12" stop-color="#c0f0ff"/><stop offset="0.25" stop-color="#d5f0ff"/><stop offset="0.38" stop-color="#ebf0ff"/><stop offset="0.5" stop-color="#ffefff"/><stop offset="0.62" stop-color="#ffdbeb"/><stop offset="0.75" stop-color="#ffc9d9"/><stop offset="0.88" stop-color="#ffb9c8"/><stop offset="1.0" stop-color="#ffa9b8"/></linearGradient>
<linearGradient id="cs39"><stop offset="0.0" stop-color="#aaefff"/><stop offset="0.12" stop-color="#c0eeff"/><stop offset="0.25" stop-color="#d5eeff"/><stop offset="0.38" stop-color="#eaeeff"/><stop offset="0.5" stop-color="#ffedff"/><stop offset="0.62" stop-color="#ffdaeb"/><stop offset="0.75" stop-color="#ffc8d9"/><stop offset="0.88" stop-color="#ffb7c8"/><stop offset="1.0" stop-color="#ffa7b8"/></linearGradient>
<linearGradient id="cs40"><stop offset="0.0" stop-color="#aaedff"/><stop offset="0.12" stop-color="#c0edff"/><stop offset="0.25" stop-color="#d5ecff"/><stop offset="0.38" stop-color="#eaecff"/><stop offset="0.5" stop-color="#ffecff"/><stop offset="0.62" stop-color="#ffd8eb"/><stop offset="0.75" stop-color="#ffc6d9"/><stop offset="0.88" stop-color="#ffb6c8"/><stop offset="1.0" stop-color="#ffa6b9"/></linearGradient>
<linearGradient id="cs41"><stop offset="0.0" stop-color="#aaebff"/><stop offset="0.12" stop-color="#c0ebff"/><stop offset="0.25" stop-color="#d5ebff"/><stop offset="0.38" stop-color="#eaeaff"/><stop offset="0.5" stop-color="#ffeaff"/><stop offset="0.62" stop-color="#ffd7eb"/><stop offset="0.75" stop-color="#ffc5d9"/><stop offset="0.88" stop-color="#ffb4c8"/><stop offset="1.0" stop-color="#ffa5b9"/></linearGradient>
<linearGradient id="cs42"><stop offset="0.0" stop-color="#aaeaff"/><stop offset="0.12" stop-color="#c0e9ff"/><stop offset="0.25" stop-color="#d5e9ff"/><stop offset="0.38" stop-color="#eae8ff"/><stop offset="0.5" stop-color="#ffe8ff"/><stop offset="0.62" stop-color="#ffd5ec"/><stop offset="0.75" stop-color="#ffc3da"/><stop offset="0.88" stop-color="#ffb3c9"/><stop offset="1.0" stop-color="#ffa3b9"/></linearGradient>
<linearGradient id="cs43"><stop offset="0.0" stop-color="#aae8ff"/><stop offset="0.12" stop-color="#c0e8ff"/><stop offset="0.25" stop-color="#d5e7ff"/><stop offset="0.38" stop-color="#eae7ff"/><stop offset="0.5" stop-color="#ffe6ff"/><stop offset="0.62" stop-color="#ffd3ec"/><stop offset="0.75" stop-color="#ffc2da"/><stop offset="0.88" stop-color="#ffb1c9"/><stop offset="1.0" stop-color="#ffa2b9"/></linearGradient>
<linearGradient id="cs44"><stop offset="0.0" stop-color="#aae6ff"/><stop offset="0.12" stop-color="#c0e6ff"/><stop offset="0.25" stop-color="#d5e5ff"/><stop offset="0.38" stop-color="#eae5ff"/><stop offset="0.5" stop-color="#ffe4ff"/><stop offset="0.62" stop-color="#ffd2ec"/><stop offset="0.75" stop-color="#ffc0da"/><stop offset="0.88" stop-color="#ffb0c9"/><stop offset="1.0" stop-color="#ffa0ba"/></linearGradient>
<linearGradient id="cs45"><stop offset="0.0" stop-color="#aae5ff"/><stop offset="0.12" stop-color="#c0e4ff"/><stop offset="0.25" stop-color="#d5e4ff"/><stop offset="0.38" stop-color="#eae3ff"/><stop offset="0.5" stop-color="#fee3ff"/><stop offset="0.62" stop-color="#ffd0ec"/><stop offset="0.75" stop-color="#ffbfda"/><stop offset="0.88" stop-color="#ffaec9"/><stop offset="1.0" stop-color="#ff9fba"/></linearGradient>
<linearGradient id="cs46"><stop offset="0.0" stop-color="#abe3ff"/><stop offset="0.12" stop-color="#c0e3ff"/><stop offset="0.25" stop-color="#d5e2ff"/><stop offset="0.38" stop-color="#eae1ff"/><stop offset="0.5" stop-color="#fee1ff"/><stop offset="0.62" stop-color="#ffcfec"/><stop offset="0.75" stop-color="#ffbdda"/><stop offset="0.88" stop-color="#ffadca"/><stop offset="1.0" stop-color="#ff9dba"/></linearGradient>
<linearGradient id="cs47"><stop offset="0.0" stop-color="#abe1ff"/><stop offset="0.12" stop-color="#c0e1ff"/><stop offset="0.25" stop-color="#d5e0ff"/><stop offset="0.38" stop-color="#eae0ff"/><stop offset="0.5" stop-color="#fedfff"/><stop offset="0.62" stop-color="#ffcdec"/><stop offset="0.75" stop-color="#ffbbdb"/><stop offset="0.88" stop-color="#ffabca"/><stop offset="1.0" stop-color="#ff9cba"/></linearGradient>
<linearGradient id="cs48"><stop offset="0.0" stop-color="#abe0ff"/><stop offset="0.12" stop-color="#c0dfff"/><stop offset="0.25" stop-color="#d5dfff"/><stop offset="0.38" stop-color="#eadeff"/><stop offset="0.5" stop-color="#feddff"/><stop offset="0.62" stop-color="#ffcbed"/><stop offset="0.75" stop-color="#ffbadb"/><stop offset="0.88" stop-color="#ffaaca"/><stop offset="1.0" stop-color="#ff9abb"/></linearGradient>
<linearGradient id="cs49"><stop offset="0.0" stop-color="#abdeff"/><stop offset="0.12" stop-color="#c0deff"/><stop offset="0.25" stop-color="#d5ddff"/><stop offset="0.38" stop-color="#eadcff"/><stop offset="0.5" stop-color="#fedcff"/><stop offset="0.62" stop-color="#ffcaed"/><stop offset="0.75" stop-color="#ffb8db"/><stop offset="0.88" stop-color="#ffa8ca"/><stop offset="1.0" stop-color="#ff99bb"/></linearGradient>
<linearGradient id="cs50"><stop offset="0.0" stop-color="#abddff"/><stop offset="0.12" stop-color="#c0dcff"/><stop offset="0.25" stop-color="#d5dbff"/><stop offset="0.38" stop-color="#eadaff"/><stop offset="0.5" stop-color="#fedaff"/><stop offset="0.62" stop-color="#ffc8ed"/><stop offset="0.75" stop-color="#ffb7db"/><stop offset="0.88" stop-color="#ffa7cb"/><stop offset="1.0" stop-color="#ff98bb"/></linearGradient>
<linearGradient id="cs51"><stop offset="0.0" stop-color="#abdbff"/><stop offset="0.12" stop-color="#c0daff"/><stop offset="0.25" stop-color="#d5d9ff"/><stop offset="0.38" stop-color="#ead9ff"/><stop offset="0.5" stop-color="#fed8ff"/><stop offset="0.62" stop-color="#ffc7ed"/><stop offset="0.75" stop-color="#ffb5db"/><stop offset="0.88" stop-color="#ffa5cb"/><stop offset="1.0" stop-color="#ff96bb"/></linearGradient>
<linearGradient id="cs52"><stop offset="0.0" stop-color="#abd9ff"/><stop offset="0.12" stop-color="#c1d9ff"/><stop offset="0.25" stop-color="#d5d8ff"/><stop offset="0.38" stop-color="#ead7ff"/><stop offset="0.5" stop-color="#fed6ff"/><stop offset="0.62" stop-color="#ffc5ed"/><stop offset="0.75" stop-color="#ffb4dc"/><stop offset="0.88" stop-color="#ffa4cb"/><stop offset="1.0" stop-color="#ff95bc"/></linearGradient>
<linearGradient id="cs53"><stop offset="0.0" stop-color="#abd8ff"/><stop offset="0.12" stop-color="#c1d7ff"/><stop offset="0.25" stop-color="#d5d6ff"/><stop offset="0.38" stop-color="#ead5ff"/><stop offset="0.5" stop-color="#fdd4ff"/><stop offset="0.62" stop-color="#ffc3ed"/><stop offset="0.75" stop-color="#ffb2dc"/><stop offset="0.88" stop-color="#ffa2cb"/><stop offset="1.0" stop-color="#ff93bc"/></linearGradient>
<linearGradient id="cs54"><stop offset="0.0" stop-color="#abd6ff"/><stop offset="0.12" stop-color="#c1d5ff"/><stop offset="0.25" stop-color="#d5d4ff"/><stop offset="0.38" stop-color="#e9d4ff"/><stop offset="0.5" stop-color="#fdd3ff"/><stop offset="0.62" stop-color="#ffc2ee"/><stop offset="0.75" stop-color="#ffb1dc"/><stop offset="0.88" stop-color="#ffa1cc"/><stop offset="1.0" stop-color="#ff92bc"/></linearGradient>
<linearGradient id="cs55"><stop offset="0.0" stop-color="#acd4ff"/><stop offset="0.12" stop-color="#c1d3ff"/><stop offset="0.25" stop-color="#d5d3ff"/><stop offset="0.38" stop-color="#e9d2ff"/><stop offset="0.5" stop-color="#fdd1ff"/><stop offset="0.62" stop-color="#ffc0ee"/><stop offset="0.75" stop-color="#ffafdc"/><stop offset="0.88" stop-color="#ff9fcc"/><stop offset="1.0" stop-color="#ff90bc"/></linearGradient>
<linearGradient id="cs56"><stop offset="0.0" stop-color="#acd3ff"/><stop offset="0.12" stop-color="#c1d2ff"/><stop offset="0.25" stop-color="#d5d1ff"/><stop offset="0.38" stop-color="#e9d0ff"/><stop offset="0.5" stop-color="#fdcfff"/><stop offset="0.62" stop-color="#ffbfee"/><stop offset="0.75" stop-color="#ffaedc"/><stop offset="0.88" stop-color="#ff9ecc"/><stop offset="1.0" stop-color="#ff8fbd"/></linearGradient>
<linearGradient id="cs57"><stop offset="0.0" stop-color="#acd1ff"/><stop offset="0.12" stop-color="#c1d0ff"/><stop offset="0.25" stop-color="#d5cfff"/><stop offset="0.38" stop-color="#e9ceff"/><stop offset="0.5" stop-color="#fdcdff"/><stop offset="0.62" stop-color="#ffbdee"/><stop offset="0.75" stop-color="#ffacdd"/><stop offset="0.88" stop-color="#ff9ccc"/><stop offset="1.0" stop-color="#ff8dbd"/></linearGradient>
<linearGradient id="cs58"><stop offset="0.0" stop-color="#accfff"/><stop offset="0.12" stop-color="#c1ceff"/><stop offset="0.25" stop-color="#d5ceff"/><stop offset="0.38" stop-color="#e9cdff"/><stop offset="0.5" stop-color="#fdccff"/><stop offset="0.62" stop-color="#ffbbee"/><stop offset="0.75" stop-color="#ffabdd"/><stop offset="0.88" stop-color="#ff9bcc"/><stop offset="1.0" stop-color="#ff8cbd"/></linearGradient>
<linearGradient id="cs59"><stop offset="0.0" stop-color="#acceff"/><stop offset="0.12" stop-color="#c1cdff"/><stop offset="0.25" stop-color="#d5ccff"/><stop offset="0.38" stop-color="#e9cbff"/><stop offset="0.5" stop-color="#fdcaff"/><stop offset="0.62" stop-color="#ffbaee"/><stop offset="0.75" stop-color="#ffa9dd"/><stop offset="0.88" stop-color="#ff99cd"/><stop offset="1.0" stop-color="#ff8bbd"/></linearGradient>
</defs>
<path d="M10.4 2.9000000000000004L14.9 7.4L10.4 11.9L5.9 7.4z" fill="#f2c220" opacity="1"/><path d="M5.4 7.800000000000001L9.9 12.3L5.4 16.8L0.9000000000000004 12.3z" fill="#33aee8" opacity="1"/><path d="M15.4 7.800000000000001L19.9 12.3L15.4 16.8L10.9 12.3z" fill="#2fd02f" opacity="1"/><path d="M10.4 13.100000000000001L14.9 17.6L10.4 22.1L5.9 17.6z" fill="#e3245f" opacity="1"/><path d="M10.4 5.800000000000001L12.5 7.9L10.4 10.0L8.3 7.9z" fill="#ffe27a" opacity="0.7"/><path d="M5.9 10.200000000000001L8.0 12.3L5.9 14.4L3.8000000000000003 12.3z" fill="#8fdcff" opacity="0.7"/><path d="M14.9 10.200000000000001L17.0 12.3L14.9 14.4L12.8 12.3z" fill="#7af07a" opacity="0.7"/><path d="M10.4 15.000000000000002L12.5 17.1L10.4 19.200000000000003L8.3 17.1z" fill="#ff7aa5" opacity="0.7"/>
<text x="23.7" y="17.8" font-size="12.7" fill="#111111" textLength="444.5" lengthAdjust="spacingAndGlyphs">Calman 2021 Calman Ultimate for Business 346 Days Remaining  - Untitled</text>
<line x1="1791" y1="12.5" x2="1802.2" y2="12.5" stroke="#1a1a1a" stroke-width="1.1"/>
<path d="M1843.5 9.500h8v8h-8z M1846.500 9.500v-3h8v8h-3" fill="none" stroke="#1a1a1a" stroke-width="1.05"/>
<path d="M1896.8 7l11 11M1907.8 7l-11 11" fill="none" stroke="#1a1a1a" stroke-width="1.1"/>
<g transform="translate(38.8,41.9) rotate(45)"><rect x="-9.1" y="-9.1" width="18.2" height="18.2" rx="2.5" fill="none" stroke="#ffffff" stroke-width="2.1"/><rect x="-6.3" y="-6.3" width="5.6" height="5.6" rx="0.7" fill="#ffffff"/><rect x="0.7" y="-6.3" width="5.6" height="5.6" rx="0.7" fill="#ffffff"/><rect x="-6.3" y="0.7" width="5.6" height="5.6" rx="0.7" fill="#ffffff"/><rect x="0.7" y="0.7" width="5.6" height="5.6" rx="0.7" fill="#ffffff"/></g>
<text x="56.4" y="49.4" font-size="25.5" fill="#ffffff" textLength="96.5" lengthAdjust="spacingAndGlyphs" stroke="#ffffff" stroke-width="0.3">calman</text>
<path d="M182.5 40.5h10l-5 5.5z" fill="#ffffff"/>
<path d="M11 73.5v13l7-6.5z" fill="#ffffff"/>
<text x="40" y="88.5" font-size="14.5" fill="#e8e8e8" textLength="53" lengthAdjust="spacingAndGlyphs">History 1</text>
<path d="M113 85.5h7M116.5 82v7" stroke="#8a8a8a" stroke-width="1" fill="none"/>
<path d="M1379.3 79.5h9l-4.5 5z" fill="#ffffff"/>
<text x="1295" y="78.6" font-size="12.5" fill="#f0f0f0" textLength="74" lengthAdjust="spacingAndGlyphs" stroke="#f0f0f0" stroke-width="0.25">X-Rite i1Pro 2</text>
<text x="1295" y="94.7" font-size="12.5" fill="#f0f0f0" textLength="62.5" lengthAdjust="spacingAndGlyphs" stroke="#f0f0f0" stroke-width="0.25">Direct View</text>
<text x="1429.4" y="86.4" font-size="11" fill="#ffffff" textLength="17.5" lengthAdjust="spacingAndGlyphs" text-anchor="middle" stroke="#ffffff" stroke-width="0.3">239</text>
<path d="M1665.9 81.5h9l-4.5 5z" fill="#ffffff"/>
<text x="1463.3" y="78" font-size="12.5" fill="#f0f0f0" textLength="192" lengthAdjust="spacingAndGlyphs" stroke="#f0f0f0" stroke-width="0.25">CalMAN Client 3 Pattern Generator</text>
<path d="M1834.7 81.9h9l-4.5 5z" fill="#ffffff"/>
<text x="1705.5" y="78" font-size="12.5" fill="#f0f0f0" textLength="119" lengthAdjust="spacingAndGlyphs" stroke="#f0f0f0" stroke-width="0.25">Direct Display Control</text>
<g transform="translate(1880,81) scale(0.86)" opacity="0.9"><rect x="-1.7" y="-8.3" width="3.4" height="4" transform="rotate(0)" fill="#e8e8e8"/><rect x="-1.7" y="-8.3" width="3.4" height="4" transform="rotate(45)" fill="#e8e8e8"/><rect x="-1.7" y="-8.3" width="3.4" height="4" transform="rotate(90)" fill="#e8e8e8"/><rect x="-1.7" y="-8.3" width="3.4" height="4" transform="rotate(135)" fill="#e8e8e8"/><rect x="-1.7" y="-8.3" width="3.4" height="4" transform="rotate(180)" fill="#e8e8e8"/><rect x="-1.7" y="-8.3" width="3.4" height="4" transform="rotate(225)" fill="#e8e8e8"/><rect x="-1.7" y="-8.3" width="3.4" height="4" transform="rotate(270)" fill="#e8e8e8"/><rect x="-1.7" y="-8.3" width="3.4" height="4" transform="rotate(315)" fill="#e8e8e8"/><circle r="4.9" fill="none" stroke="#e8e8e8" stroke-width="2.6"/></g>
<path d="M1919 74.5v13l-7-6.5z" fill="#ffffff"/>
<text x="102.5" y="162" font-size="42.5" fill="#f2f2f2" textLength="177.5" lengthAdjust="spacingAndGlyphs" stroke="#f2f2f2" stroke-width="0.35">Grayscale</text>
<text x="276.5" y="216" font-size="16" fill="#dcdcdc" textLength="84.5" lengthAdjust="spacingAndGlyphs" text-anchor="middle" stroke="#dcdcdc" stroke-width="0.25">DeltaE 2000</text>
<line x1="167.8" y1="220.9" x2="167.8" y2="487.1" stroke="#b0b0b0" stroke-width="1.4"/>
<line x1="167.8" y1="487.1" x2="167.8" y2="493.90000000000003" stroke="#d4d4d4" stroke-width="1.4"/>
<text x="167.4" y="510.3" font-size="15.8" fill="#dcdcdc" textLength="8.4" lengthAdjust="spacingAndGlyphs" text-anchor="middle" stroke="#dcdcdc" stroke-width="0.25">2</text>
<line x1="211.4" y1="220.9" x2="211.4" y2="487.1" stroke="#b0b0b0" stroke-width="1.4"/>
<line x1="211.4" y1="487.1" x2="211.4" y2="493.90000000000003" stroke="#d4d4d4" stroke-width="1.4"/>
<text x="211.0" y="510.3" font-size="15.8" fill="#dcdcdc" textLength="8.4" lengthAdjust="spacingAndGlyphs" text-anchor="middle" stroke="#dcdcdc" stroke-width="0.25">4</text>
<line x1="256.2" y1="220.9" x2="256.2" y2="487.1" stroke="#b0b0b0" stroke-width="1.4"/>
<line x1="256.2" y1="487.1" x2="256.2" y2="493.90000000000003" stroke="#d4d4d4" stroke-width="1.4"/>
<text x="255.79999999999998" y="510.3" font-size="15.8" fill="#dcdcdc" textLength="8.4" lengthAdjust="spacingAndGlyphs" text-anchor="middle" stroke="#dcdcdc" stroke-width="0.25">6</text>
<line x1="299.9" y1="220.9" x2="299.9" y2="487.1" stroke="#b0b0b0" stroke-width="1.4"/>
<line x1="299.9" y1="487.1" x2="299.9" y2="493.90000000000003" stroke="#d4d4d4" stroke-width="1.4"/>
<text x="299.5" y="510.3" font-size="15.8" fill="#dcdcdc" textLength="8.4" lengthAdjust="spacingAndGlyphs" text-anchor="middle" stroke="#dcdcdc" stroke-width="0.25">8</text>
<line x1="343.2" y1="220.9" x2="343.2" y2="487.1" stroke="#b0b0b0" stroke-width="1.4"/>
<line x1="343.2" y1="487.1" x2="343.2" y2="493.90000000000003" stroke="#d4d4d4" stroke-width="1.4"/>
<text x="342.8" y="510.3" font-size="15.8" fill="#dcdcdc" textLength="16.9" lengthAdjust="spacingAndGlyphs" text-anchor="middle" stroke="#dcdcdc" stroke-width="0.25">10</text>
<line x1="388.1" y1="220.9" x2="388.1" y2="487.1" stroke="#b0b0b0" stroke-width="1.4"/>
<line x1="388.1" y1="487.1" x2="388.1" y2="493.90000000000003" stroke="#d4d4d4" stroke-width="1.4"/>
<text x="387.70000000000005" y="510.3" font-size="15.8" fill="#dcdcdc" textLength="16.9" lengthAdjust="spacingAndGlyphs" text-anchor="middle" stroke="#dcdcdc" stroke-width="0.25">12</text>
<line x1="431.7" y1="220.9" x2="431.7" y2="487.1" stroke="#b0b0b0" stroke-width="1.4"/>
<line x1="431.7" y1="487.1" x2="431.7" y2="493.90000000000003" stroke="#d4d4d4" stroke-width="1.4"/>
<text x="431.3" y="510.3" font-size="15.8" fill="#dcdcdc" textLength="16.9" lengthAdjust="spacingAndGlyphs" text-anchor="middle" stroke="#dcdcdc" stroke-width="0.25">14</text>
<line x1="124.3" y1="487.1" x2="124.3" y2="493.90000000000003" stroke="#d4d4d4" stroke-width="1.4"/>
<text x="123.89999999999999" y="510.3" font-size="15.8" fill="#dcdcdc" textLength="8.4" lengthAdjust="spacingAndGlyphs" text-anchor="middle" stroke="#dcdcdc" stroke-width="0.25">0</text>
<rect x="124.3" y="223.1" width="44.7" height="18.5" fill="#050505"/>
<rect x="124.3" y="225.0" width="43.1" height="14.8" fill="url(#bar100)"/>
<line x1="117.7" y1="220.9" x2="124.3" y2="220.9" stroke="#d4d4d4" stroke-width="1.4"/>
<text x="123.3" y="239.7" font-size="16.1" fill="#dcdcdc" textLength="24.6" lengthAdjust="spacingAndGlyphs" text-anchor="end" stroke="#dcdcdc" stroke-width="0.25">100</text>
<rect x="124.3" y="247.3" width="32.5" height="18.5" fill="#050505"/>
<rect x="124.3" y="249.2" width="30.9" height="14.8" fill="url(#bar90)"/>
<line x1="117.7" y1="245.10000000000002" x2="124.3" y2="245.10000000000002" stroke="#d4d4d4" stroke-width="1.4"/>
<text x="123.3" y="263.9" font-size="16.1" fill="#dcdcdc" textLength="16.4" lengthAdjust="spacingAndGlyphs" text-anchor="end" stroke="#dcdcdc" stroke-width="0.25">90</text>
<rect x="124.3" y="271.5" width="27.2" height="18.5" fill="#050505"/>
<rect x="124.3" y="273.4" width="25.6" height="14.8" fill="url(#bar80)"/>
<line x1="117.7" y1="269.3" x2="124.3" y2="269.3" stroke="#d4d4d4" stroke-width="1.4"/>
<text x="123.3" y="288.1" font-size="16.1" fill="#dcdcdc" textLength="16.4" lengthAdjust="spacingAndGlyphs" text-anchor="end" stroke="#dcdcdc" stroke-width="0.25">80</text>
<rect x="124.3" y="295.7" width="26.5" height="18.5" fill="#050505"/>
<rect x="124.3" y="297.6" width="24.9" height="14.8" fill="url(#bar70)"/>
<line x1="117.7" y1="293.5" x2="124.3" y2="293.5" stroke="#d4d4d4" stroke-width="1.4"/>
<text x="123.3" y="312.3" font-size="16.1" fill="#dcdcdc" textLength="16.4" lengthAdjust="spacingAndGlyphs" text-anchor="end" stroke="#dcdcdc" stroke-width="0.25">70</text>
<rect x="124.3" y="319.9" width="17.6" height="18.5" fill="#050505"/>
<rect x="124.3" y="321.8" width="16.0" height="14.8" fill="url(#bar60)"/>
<line x1="117.7" y1="317.70000000000005" x2="124.3" y2="317.70000000000005" stroke="#d4d4d4" stroke-width="1.4"/>
<text x="123.3" y="336.5" font-size="16.1" fill="#dcdcdc" textLength="16.4" lengthAdjust="spacingAndGlyphs" text-anchor="end" stroke="#dcdcdc" stroke-width="0.25">60</text>
<rect x="124.3" y="344.1" width="25.5" height="18.5" fill="#050505"/>
<rect x="124.3" y="346.0" width="23.9" height="14.8" fill="url(#bar50)"/>
<line x1="117.7" y1="341.90000000000003" x2="124.3" y2="341.90000000000003" stroke="#d4d4d4" stroke-width="1.4"/>
<text x="123.3" y="360.7" font-size="16.1" fill="#dcdcdc" textLength="16.4" lengthAdjust="spacingAndGlyphs" text-anchor="end" stroke="#dcdcdc" stroke-width="0.25">50</text>
<rect x="124.3" y="368.3" width="16.5" height="18.5" fill="#050505"/>
<rect x="124.3" y="370.2" width="14.9" height="14.8" fill="url(#bar40)"/>
<line x1="117.7" y1="366.1" x2="124.3" y2="366.1" stroke="#d4d4d4" stroke-width="1.4"/>
<text x="123.3" y="384.9" font-size="16.1" fill="#dcdcdc" textLength="16.4" lengthAdjust="spacingAndGlyphs" text-anchor="end" stroke="#dcdcdc" stroke-width="0.25">40</text>
<rect x="124.3" y="392.5" width="19.3" height="18.5" fill="#050505"/>
<rect x="124.3" y="394.4" width="17.7" height="14.8" fill="url(#bar30)"/>
<line x1="117.7" y1="390.30000000000007" x2="124.3" y2="390.30000000000007" stroke="#d4d4d4" stroke-width="1.4"/>
<text x="123.3" y="409.1" font-size="16.1" fill="#dcdcdc" textLength="16.4" lengthAdjust="spacingAndGlyphs" text-anchor="end" stroke="#dcdcdc" stroke-width="0.25">30</text>
<rect x="124.3" y="416.7" width="27.7" height="18.5" fill="#050505"/>
<rect x="124.3" y="418.6" width="26.1" height="14.8" fill="url(#bar20)"/>
<line x1="117.7" y1="414.5" x2="124.3" y2="414.5" stroke="#d4d4d4" stroke-width="1.4"/>
<text x="123.3" y="433.3" font-size="16.1" fill="#dcdcdc" textLength="16.4" lengthAdjust="spacingAndGlyphs" text-anchor="end" stroke="#dcdcdc" stroke-width="0.25">20</text>
<rect x="124.3" y="440.9" width="39.7" height="18.5" fill="#050505"/>
<rect x="124.3" y="442.8" width="38.1" height="14.8" fill="url(#bar10)"/>
<line x1="117.7" y1="438.70000000000005" x2="124.3" y2="438.70000000000005" stroke="#d4d4d4" stroke-width="1.4"/>
<text x="123.3" y="457.5" font-size="16.1" fill="#dcdcdc" textLength="16.4" lengthAdjust="spacingAndGlyphs" text-anchor="end" stroke="#dcdcdc" stroke-width="0.25">10</text>
<rect x="124.3" y="465.1" width="13.6" height="18.5" fill="#050505"/>
<rect x="124.3" y="467.0" width="12.0" height="14.8" fill="url(#bar0)"/>
<line x1="117.7" y1="462.90000000000003" x2="124.3" y2="462.90000000000003" stroke="#d4d4d4" stroke-width="1.4"/>
<text x="123.3" y="481.7" font-size="16.1" fill="#dcdcdc" textLength="8.2" lengthAdjust="spacingAndGlyphs" text-anchor="end" stroke="#dcdcdc" stroke-width="0.25">0</text>
<line x1="117.7" y1="487.1" x2="124.3" y2="487.1" stroke="#d4d4d4" stroke-width="1.4"/>
<rect x="124.3" y="220.9" width="330.0" height="266.20000000000005" fill="none" stroke="#b0b0b0" stroke-width="1.4"/>
<text x="816" y="143.3" font-size="16" fill="#dcdcdc" textLength="88.5" lengthAdjust="spacingAndGlyphs" text-anchor="middle" stroke="#dcdcdc" stroke-width="0.25">RGB Balance</text>
<line x1="525.5" y1="183.5" x2="1135.8" y2="183.5" stroke="#b0b0b0" stroke-width="1.4"/>
<line x1="519.5" y1="183.5" x2="525.5" y2="183.5" stroke="#d4d4d4" stroke-width="1.4"/>
<text x="518.8" y="188.8" font-size="15.8" fill="#dcdcdc" textLength="16.9" lengthAdjust="spacingAndGlyphs" text-anchor="end" stroke="#dcdcdc" stroke-width="0.25">40</text>
<line x1="525.5" y1="251.5" x2="1135.8" y2="251.5" stroke="#b0b0b0" stroke-width="1.4"/>
<line x1="519.5" y1="251.5" x2="525.5" y2="251.5" stroke="#d4d4d4" stroke-width="1.4"/>
<text x="518.8" y="256.8" font-size="15.8" fill="#dcdcdc" textLength="16.9" lengthAdjust="spacingAndGlyphs" text-anchor="end" stroke="#dcdcdc" stroke-width="0.25">20</text>
<line x1="525.5" y1="319.5" x2="1135.8" y2="319.5" stroke="#b0b0b0" stroke-width="1.4"/>
<line x1="519.5" y1="319.5" x2="525.5" y2="319.5" stroke="#d4d4d4" stroke-width="1.4"/>
<text x="518.8" y="324.8" font-size="15.8" fill="#dcdcdc" textLength="8.4" lengthAdjust="spacingAndGlyphs" text-anchor="end" stroke="#dcdcdc" stroke-width="0.25">0</text>
<line x1="525.5" y1="386.9" x2="1135.8" y2="386.9" stroke="#b0b0b0" stroke-width="1.4"/>
<line x1="519.5" y1="386.9" x2="525.5" y2="386.9" stroke="#d4d4d4" stroke-width="1.4"/>
<text x="518.8" y="392.2" font-size="15.8" fill="#dcdcdc" textLength="22.2" lengthAdjust="spacingAndGlyphs" text-anchor="end" stroke="#dcdcdc" stroke-width="0.25">-20</text>
<line x1="525.5" y1="454.3" x2="1135.8" y2="454.3" stroke="#b0b0b0" stroke-width="1.4"/>
<line x1="519.5" y1="454.3" x2="525.5" y2="454.3" stroke="#d4d4d4" stroke-width="1.4"/>
<text x="518.8" y="459.6" font-size="15.8" fill="#dcdcdc" textLength="22.2" lengthAdjust="spacingAndGlyphs" text-anchor="end" stroke="#dcdcdc" stroke-width="0.25">-40</text>
<line x1="525.5" y1="486.6" x2="525.5" y2="493.40000000000003" stroke="#d4d4d4" stroke-width="1.4"/>
<text x="525.1" y="510.3" font-size="15.8" fill="#dcdcdc" textLength="8.4" lengthAdjust="spacingAndGlyphs" text-anchor="middle" stroke="#dcdcdc" stroke-width="0.25">0</text>
<line x1="586.5" y1="486.6" x2="586.5" y2="493.40000000000003" stroke="#d4d4d4" stroke-width="1.4"/>
<text x="586.1" y="510.3" font-size="15.8" fill="#dcdcdc" textLength="16.9" lengthAdjust="spacingAndGlyphs" text-anchor="middle" stroke="#dcdcdc" stroke-width="0.25">10</text>
<line x1="647.6" y1="486.6" x2="647.6" y2="493.40000000000003" stroke="#d4d4d4" stroke-width="1.4"/>
<text x="647.2" y="510.3" font-size="15.8" fill="#dcdcdc" textLength="16.9" lengthAdjust="spacingAndGlyphs" text-anchor="middle" stroke="#dcdcdc" stroke-width="0.25">20</text>
<line x1="708.6" y1="486.6" x2="708.6" y2="493.40000000000003" stroke="#d4d4d4" stroke-width="1.4"/>
<text x="708.2" y="510.3" font-size="15.8" fill="#dcdcdc" textLength="16.9" lengthAdjust="spacingAndGlyphs" text-anchor="middle" stroke="#dcdcdc" stroke-width="0.25">30</text>
<line x1="769.6" y1="486.6" x2="769.6" y2="493.40000000000003" stroke="#d4d4d4" stroke-width="1.4"/>
<text x="769.2" y="510.3" font-size="15.8" fill="#dcdcdc" textLength="16.9" lengthAdjust="spacingAndGlyphs" text-anchor="middle" stroke="#dcdcdc" stroke-width="0.25">40</text>
<line x1="830.6" y1="486.6" x2="830.6" y2="493.40000000000003" stroke="#d4d4d4" stroke-width="1.4"/>
<text x="830.2" y="510.3" font-size="15.8" fill="#dcdcdc" textLength="16.9" lengthAdjust="spacingAndGlyphs" text-anchor="middle" stroke="#dcdcdc" stroke-width="0.25">50</text>
<line x1="891.7" y1="486.6" x2="891.7" y2="493.40000000000003" stroke="#d4d4d4" stroke-width="1.4"/>
<text x="891.3000000000001" y="510.3" font-size="15.8" fill="#dcdcdc" textLength="16.9" lengthAdjust="spacingAndGlyphs" text-anchor="middle" stroke="#dcdcdc" stroke-width="0.25">60</text>
<line x1="952.7" y1="486.6" x2="952.7" y2="493.40000000000003" stroke="#d4d4d4" stroke-width="1.4"/>
<text x="952.3000000000001" y="510.3" font-size="15.8" fill="#dcdcdc" textLength="16.9" lengthAdjust="spacingAndGlyphs" text-anchor="middle" stroke="#dcdcdc" stroke-width="0.25">70</text>
<line x1="1013.7" y1="486.6" x2="1013.7" y2="493.40000000000003" stroke="#d4d4d4" stroke-width="1.4"/>
<text x="1013.3000000000001" y="510.3" font-size="15.8" fill="#dcdcdc" textLength="16.9" lengthAdjust="spacingAndGlyphs" text-anchor="middle" stroke="#dcdcdc" stroke-width="0.25">80</text>
<line x1="1074.8" y1="486.6" x2="1074.8" y2="493.40000000000003" stroke="#d4d4d4" stroke-width="1.4"/>
<text x="1074.3999999999999" y="510.3" font-size="15.8" fill="#dcdcdc" textLength="16.9" lengthAdjust="spacingAndGlyphs" text-anchor="middle" stroke="#dcdcdc" stroke-width="0.25">90</text>
<line x1="1135.8" y1="486.6" x2="1135.8" y2="493.40000000000003" stroke="#d4d4d4" stroke-width="1.4"/>
<text x="1135.3999999999999" y="510.3" font-size="15.8" fill="#dcdcdc" textLength="25.3" lengthAdjust="spacingAndGlyphs" text-anchor="middle" stroke="#dcdcdc" stroke-width="0.25">100</text>
<rect x="525.5" y="148.3" width="610.3" height="338.3" fill="none" stroke="#b0b0b0" stroke-width="1.4"/>
<clipPath id="cpr"><rect x="526" y="149" width="609.5" height="337"/></clipPath>
<polyline points="525.5,312.0 586.5,342.4 647.6,333.0 708.6,326.1 769.6,322.5 830.6,320.3 891.7,318.8 952.7,317.5 1013.7,317.6 1074.8,317.5 1135.8,315.4" fill="none" stroke="#10921a" stroke-width="3.0" stroke-linejoin="round" stroke-linecap="butt" clip-path="url(#cpr)"/>
<polyline points="525.5,314.4 586.5,347.5 647.6,331.6 708.6,324.9 769.6,324.2 830.6,322.5 891.7,321.5 952.7,321.0 1013.7,321.5 1074.8,322.0 1135.8,320.3" fill="none" stroke="#ee1238" stroke-width="3.0" stroke-linejoin="round" stroke-linecap="butt" clip-path="url(#cpr)"/>
<polyline points="525.5,308.3 586.5,343.4 647.6,335.0 708.6,328.9 769.6,325.7 830.6,325.6 891.7,325.1 952.7,325.1 1013.7,325.7 1074.8,326.6 1135.8,326.2" fill="none" stroke="#0606f2" stroke-width="3.0" stroke-linejoin="round" stroke-linecap="butt" clip-path="url(#cpr)"/>
<text x="1497" y="143.3" font-size="16" fill="#dcdcdc" textLength="116" lengthAdjust="spacingAndGlyphs" text-anchor="middle" stroke="#dcdcdc" stroke-width="0.25">Gamma Log/Log</text>
<line x1="1205.8" y1="188.0" x2="1817.0" y2="188.0" stroke="#b0b0b0" stroke-width="1.4"/>
<line x1="1199.8" y1="188.0" x2="1205.8" y2="188.0" stroke="#d4d4d4" stroke-width="1.4"/>
<text x="1199.1" y="193.3" font-size="15.8" fill="#dcdcdc" textLength="20.9" lengthAdjust="spacingAndGlyphs" text-anchor="end" stroke="#dcdcdc" stroke-width="0.25">2,4</text>
<line x1="1205.8" y1="229.5" x2="1817.0" y2="229.5" stroke="#b0b0b0" stroke-width="1.4"/>
<line x1="1199.8" y1="229.5" x2="1205.8" y2="229.5" stroke="#d4d4d4" stroke-width="1.4"/>
<text x="1199.1" y="234.8" font-size="15.8" fill="#dcdcdc" textLength="20.9" lengthAdjust="spacingAndGlyphs" text-anchor="end" stroke="#dcdcdc" stroke-width="0.25">2,2</text>
<line x1="1205.8" y1="271.3" x2="1817.0" y2="271.3" stroke="#b0b0b0" stroke-width="1.4"/>
<line x1="1199.8" y1="271.3" x2="1205.8" y2="271.3" stroke="#d4d4d4" stroke-width="1.4"/>
<text x="1199.1" y="276.6" font-size="15.8" fill="#dcdcdc" textLength="8.4" lengthAdjust="spacingAndGlyphs" text-anchor="end" stroke="#dcdcdc" stroke-width="0.25">2</text>
<line x1="1205.8" y1="313.6" x2="1817.0" y2="313.6" stroke="#b0b0b0" stroke-width="1.4"/>
<line x1="1199.8" y1="313.6" x2="1205.8" y2="313.6" stroke="#d4d4d4" stroke-width="1.4"/>
<text x="1199.1" y="318.90000000000003" font-size="15.8" fill="#dcdcdc" textLength="20.9" lengthAdjust="spacingAndGlyphs" text-anchor="end" stroke="#dcdcdc" stroke-width="0.25">1,8</text>
<line x1="1205.8" y1="355.6" x2="1817.0" y2="355.6" stroke="#b0b0b0" stroke-width="1.4"/>
<line x1="1199.8" y1="355.6" x2="1205.8" y2="355.6" stroke="#d4d4d4" stroke-width="1.4"/>
<text x="1199.1" y="360.90000000000003" font-size="15.8" fill="#dcdcdc" textLength="20.9" lengthAdjust="spacingAndGlyphs" text-anchor="end" stroke="#dcdcdc" stroke-width="0.25">1,6</text>
<line x1="1205.8" y1="398.4" x2="1817.0" y2="398.4" stroke="#b0b0b0" stroke-width="1.4"/>
<line x1="1199.8" y1="398.4" x2="1205.8" y2="398.4" stroke="#d4d4d4" stroke-width="1.4"/>
<text x="1199.1" y="403.7" font-size="15.8" fill="#dcdcdc" textLength="20.9" lengthAdjust="spacingAndGlyphs" text-anchor="end" stroke="#dcdcdc" stroke-width="0.25">1,4</text>
<line x1="1205.8" y1="440.4" x2="1817.0" y2="440.4" stroke="#b0b0b0" stroke-width="1.4"/>
<line x1="1199.8" y1="440.4" x2="1205.8" y2="440.4" stroke="#d4d4d4" stroke-width="1.4"/>
<text x="1199.1" y="445.7" font-size="15.8" fill="#dcdcdc" textLength="20.9" lengthAdjust="spacingAndGlyphs" text-anchor="end" stroke="#dcdcdc" stroke-width="0.25">1,2</text>
<line x1="1205.8" y1="482.7" x2="1817.0" y2="482.7" stroke="#b0b0b0" stroke-width="1.4"/>
<line x1="1199.8" y1="482.7" x2="1205.8" y2="482.7" stroke="#d4d4d4" stroke-width="1.4"/>
<text x="1199.1" y="488.0" font-size="15.8" fill="#dcdcdc" textLength="8.4" lengthAdjust="spacingAndGlyphs" text-anchor="end" stroke="#dcdcdc" stroke-width="0.25">1</text>
<line x1="1205.8" y1="486.6" x2="1205.8" y2="493.40000000000003" stroke="#d4d4d4" stroke-width="1.4"/>
<text x="1205.3999999999999" y="510.3" font-size="15.8" fill="#dcdcdc" textLength="8.4" lengthAdjust="spacingAndGlyphs" text-anchor="middle" stroke="#dcdcdc" stroke-width="0.25">0</text>
<line x1="1266.9" y1="486.6" x2="1266.9" y2="493.40000000000003" stroke="#d4d4d4" stroke-width="1.4"/>
<text x="1266.5" y="510.3" font-size="15.8" fill="#dcdcdc" textLength="16.9" lengthAdjust="spacingAndGlyphs" text-anchor="middle" stroke="#dcdcdc" stroke-width="0.25">10</text>
<line x1="1328.0" y1="486.6" x2="1328.0" y2="493.40000000000003" stroke="#d4d4d4" stroke-width="1.4"/>
<text x="1327.6" y="510.3" font-size="15.8" fill="#dcdcdc" textLength="16.9" lengthAdjust="spacingAndGlyphs" text-anchor="middle" stroke="#dcdcdc" stroke-width="0.25">20</text>
<line x1="1389.2" y1="486.6" x2="1389.2" y2="493.40000000000003" stroke="#d4d4d4" stroke-width="1.4"/>
<text x="1388.8" y="510.3" font-size="15.8" fill="#dcdcdc" textLength="16.9" lengthAdjust="spacingAndGlyphs" text-anchor="middle" stroke="#dcdcdc" stroke-width="0.25">30</text>
<line x1="1450.3" y1="486.6" x2="1450.3" y2="493.40000000000003" stroke="#d4d4d4" stroke-width="1.4"/>
<text x="1449.8999999999999" y="510.3" font-size="15.8" fill="#dcdcdc" textLength="16.9" lengthAdjust="spacingAndGlyphs" text-anchor="middle" stroke="#dcdcdc" stroke-width="0.25">40</text>
<line x1="1511.4" y1="486.6" x2="1511.4" y2="493.40000000000003" stroke="#d4d4d4" stroke-width="1.4"/>
<text x="1511.0" y="510.3" font-size="15.8" fill="#dcdcdc" textLength="16.9" lengthAdjust="spacingAndGlyphs" text-anchor="middle" stroke="#dcdcdc" stroke-width="0.25">50</text>
<line x1="1572.5" y1="486.6" x2="1572.5" y2="493.40000000000003" stroke="#d4d4d4" stroke-width="1.4"/>
<text x="1572.1" y="510.3" font-size="15.8" fill="#dcdcdc" textLength="16.9" lengthAdjust="spacingAndGlyphs" text-anchor="middle" stroke="#dcdcdc" stroke-width="0.25">60</text>
<line x1="1633.6" y1="486.6" x2="1633.6" y2="493.40000000000003" stroke="#d4d4d4" stroke-width="1.4"/>
<text x="1633.1999999999998" y="510.3" font-size="15.8" fill="#dcdcdc" textLength="16.9" lengthAdjust="spacingAndGlyphs" text-anchor="middle" stroke="#dcdcdc" stroke-width="0.25">70</text>
<line x1="1694.8" y1="486.6" x2="1694.8" y2="493.40000000000003" stroke="#d4d4d4" stroke-width="1.4"/>
<text x="1694.3999999999999" y="510.3" font-size="15.8" fill="#dcdcdc" textLength="16.9" lengthAdjust="spacingAndGlyphs" text-anchor="middle" stroke="#dcdcdc" stroke-width="0.25">80</text>
<line x1="1755.9" y1="486.6" x2="1755.9" y2="493.40000000000003" stroke="#d4d4d4" stroke-width="1.4"/>
<text x="1755.5" y="510.3" font-size="15.8" fill="#dcdcdc" textLength="16.9" lengthAdjust="spacingAndGlyphs" text-anchor="middle" stroke="#dcdcdc" stroke-width="0.25">90</text>
<line x1="1817.0" y1="486.6" x2="1817.0" y2="493.40000000000003" stroke="#d4d4d4" stroke-width="1.4"/>
<text x="1816.6" y="510.3" font-size="15.8" fill="#dcdcdc" textLength="25.3" lengthAdjust="spacingAndGlyphs" text-anchor="middle" stroke="#dcdcdc" stroke-width="0.25">100</text>
<rect x="1205.8" y="148.3" width="611.2" height="338.3" fill="none" stroke="#b0b0b0" stroke-width="1.4"/>
<polyline points="1205.8,421.3 1267,235.5 1328,225.8 1389.2,222.0 1450.3,217.0 1511.4,214.4 1572.5,213.3 1633.6,211.6 1694.7,206.7 1755.8,194.6 1816.8,211.0" fill="none" stroke="#949494" stroke-width="2.9" stroke-linejoin="round" stroke-linecap="butt"/>
<polyline points="1205.8,421.3 1207.6,390 1211.5,358.8 1218.8,337.5 1227.5,316.3 1235,302.5 1245,288.8 1253.8,280 1266.3,270 1277.5,263 1290,257 1302.5,252.5 1315,248.8 1333.8,243.8 1355,239.5 1377.5,235.5 1400,232.2 1420,230.2 1451,226.6 1480,223.9 1511.8,221.7 1572.7,218.3 1633.5,215.9 1694.4,214.0 1755.3,212.7 1816.8,211.6" fill="none" stroke="#f8f42c" stroke-width="3.0" stroke-linejoin="round" stroke-linecap="butt"/>
<text x="169" y="554.5" font-size="31" fill="#f2f2f2" textLength="228.5" lengthAdjust="spacingAndGlyphs" stroke="#f2f2f2" stroke-width="0.35">Avg dE2000: 1,3</text>
<text x="606" y="554.5" font-size="31" fill="#f2f2f2" textLength="202" lengthAdjust="spacingAndGlyphs" stroke="#f2f2f2" stroke-width="0.35">Avg CCT: 6462</text>
<text x="1005" y="554.5" font-size="31" fill="#f2f2f2" textLength="295" lengthAdjust="spacingAndGlyphs" stroke="#f2f2f2" stroke-width="0.35">Contrast Ratio: 1397</text>
<text x="1463" y="554.5" font-size="31" fill="#f2f2f2" textLength="272" lengthAdjust="spacingAndGlyphs" stroke="#f2f2f2" stroke-width="0.35">Total Gamma: 2,25</text>
<text x="412.5" y="706.1" font-size="11.8" fill="#ffffff" textLength="7.2" lengthAdjust="spacingAndGlyphs" text-anchor="middle" stroke="#ffffff" stroke-width="0.3">0</text>
<text x="535.1" y="706.1" font-size="11.8" fill="#ffffff" textLength="14.4" lengthAdjust="spacingAndGlyphs" text-anchor="middle" stroke="#ffffff" stroke-width="0.3">10</text>
<text x="657.6999999999999" y="706.1" font-size="11.8" fill="#ffffff" textLength="14.4" lengthAdjust="spacingAndGlyphs" text-anchor="middle" stroke="#ffffff" stroke-width="0.3">20</text>
<text x="780.1999999999999" y="706.1" font-size="11.8" fill="#ffffff" textLength="14.4" lengthAdjust="spacingAndGlyphs" text-anchor="middle" stroke="#ffffff" stroke-width="0.3">30</text>
<text x="902.8" y="706.1" font-size="11.8" fill="#ffffff" textLength="14.4" lengthAdjust="spacingAndGlyphs" text-anchor="middle" stroke="#ffffff" stroke-width="0.3">40</text>
<text x="1025.4" y="706.1" font-size="11.8" fill="#ffffff" textLength="14.4" lengthAdjust="spacingAndGlyphs" text-anchor="middle" stroke="#ffffff" stroke-width="0.3">50</text>
<text x="1148.0" y="706.1" font-size="11.8" fill="#ffffff" textLength="14.4" lengthAdjust="spacingAndGlyphs" text-anchor="middle" stroke="#ffffff" stroke-width="0.3">60</text>
<text x="1270.6000000000001" y="706.1" font-size="11.8" fill="#ffffff" textLength="14.4" lengthAdjust="spacingAndGlyphs" text-anchor="middle" stroke="#ffffff" stroke-width="0.3">70</text>
<text x="1393.1000000000001" y="706.1" font-size="11.8" fill="#ffffff" textLength="14.4" lengthAdjust="spacingAndGlyphs" text-anchor="middle" stroke="#ffffff" stroke-width="0.3">80</text>
<text x="1515.7" y="706.1" font-size="11.8" fill="#ffffff" textLength="14.4" lengthAdjust="spacingAndGlyphs" text-anchor="middle" stroke="#ffffff" stroke-width="0.3">90</text>
<text x="1638.3000000000002" y="706.1" font-size="11.8" fill="#ffffff" textLength="21.6" lengthAdjust="spacingAndGlyphs" text-anchor="middle" stroke="#ffffff" stroke-width="0.3">100</text>
<text transform="translate(351.9,624.2) rotate(-90)" font-size="11.7" fill="#ffffff" stroke="#ffffff" stroke-width="0.25" textLength="36.8" lengthAdjust="spacingAndGlyphs">Actual</text>
<text transform="translate(351.9,685.3) rotate(-90)" font-size="11.7" fill="#ffffff" stroke="#ffffff" stroke-width="0.25" textLength="36.6" lengthAdjust="spacingAndGlyphs">Target</text>
<text x="92" y="770" font-size="31" fill="#f2f2f2" textLength="233" lengthAdjust="spacingAndGlyphs" stroke="#f2f2f2" stroke-width="0.3">Current Reading</text>
<text x="92" y="816.1" font-size="26.9" fill="#f2f2f2" textLength="108.5" lengthAdjust="spacingAndGlyphs" stroke="#f2f2f2" stroke-width="0.3">x: 0,3137</text>
<text x="92" y="859.7" font-size="26.9" fill="#f2f2f2" textLength="109" lengthAdjust="spacingAndGlyphs" stroke="#f2f2f2" stroke-width="0.3">y: 0,3321</text>
<text x="92" y="902.9" font-size="26.9" fill="#f2f2f2" textLength="118" lengthAdjust="spacingAndGlyphs" stroke="#f2f2f2" stroke-width="0.3">fL: 150,48</text>
<text x="92" y="946.2" font-size="26.9" fill="#f2f2f2" textLength="168.5" lengthAdjust="spacingAndGlyphs" stroke="#f2f2f2" stroke-width="0.3">cd/m²: 515,57</text>
<rect x="473" y="750.2" width="253.4" height="3.63" fill="url(#cs0)"/>
<rect x="473" y="753.23" width="253.4" height="3.63" fill="url(#cs1)"/>
<rect x="473" y="756.25" width="253.4" height="3.63" fill="url(#cs2)"/>
<rect x="473" y="759.28" width="253.4" height="3.63" fill="url(#cs3)"/>
<rect x="473" y="762.31" width="253.4" height="3.63" fill="url(#cs4)"/>
<rect x="473" y="765.33" width="253.4" height="3.63" fill="url(#cs5)"/>
<rect x="473" y="768.36" width="253.4" height="3.63" fill="url(#cs6)"/>
<rect x="473" y="771.39" width="253.4" height="3.63" fill="url(#cs7)"/>
<rect x="473" y="774.41" width="253.4" height="3.63" fill="url(#cs8)"/>
<rect x="473" y="777.44" width="253.4" height="3.63" fill="url(#cs9)"/>
<rect x="473" y="780.47" width="253.4" height="3.63" fill="url(#cs10)"/>
<rect x="473" y="783.49" width="253.4" height="3.63" fill="url(#cs11)"/>
<rect x="473" y="786.52" width="253.4" height="3.63" fill="url(#cs12)"/>
<rect x="473" y="789.55" width="253.4" height="3.63" fill="url(#cs13)"/>
<rect x="473" y="792.57" width="253.4" height="3.63" fill="url(#cs14)"/>
<rect x="473" y="795.6" width="253.4" height="3.63" fill="url(#cs15)"/>
<rect x="473" y="798.63" width="253.4" height="3.63" fill="url(#cs16)"/>
<rect x="473" y="801.65" width="253.4" height="3.63" fill="url(#cs17)"/>
<rect x="473" y="804.68" width="253.4" height="3.63" fill="url(#cs18)"/>
<rect x="473" y="807.71" width="253.4" height="3.63" fill="url(#cs19)"/>
<rect x="473" y="810.73" width="253.4" height="3.63" fill="url(#cs20)"/>
<rect x="473" y="813.76" width="253.4" height="3.63" fill="url(#cs21)"/>
<rect x="473" y="816.79" width="253.4" height="3.63" fill="url(#cs22)"/>
<rect x="473" y="819.81" width="253.4" height="3.63" fill="url(#cs23)"/>
<rect x="473" y="822.84" width="253.4" height="3.63" fill="url(#cs24)"/>
<rect x="473" y="825.87" width="253.4" height="3.63" fill="url(#cs25)"/>
<rect x="473" y="828.89" width="253.4" height="3.63" fill="url(#cs26)"/>
<rect x="473" y="831.92" width="253.4" height="3.63" fill="url(#cs27)"/>
<rect x="473" y="834.95" width="253.4" height="3.63" fill="url(#cs28)"/>
<rect x="473" y="837.97" width="253.4" height="3.63" fill="url(#cs29)"/>
<rect x="473" y="841.0" width="253.4" height="3.63" fill="url(#cs30)"/>
<rect x="473" y="844.03" width="253.4" height="3.63" fill="url(#cs31)"/>
<rect x="473" y="847.05" width="253.4" height="3.63" fill="url(#cs32)"/>
<rect x="473" y="850.08" width="253.4" height="3.63" fill="url(#cs33)"/>
<rect x="473" y="853.11" width="253.4" height="3.63" fill="url(#cs34)"/>
<rect x="473" y="856.13" width="253.4" height="3.63" fill="url(#cs35)"/>
<rect x="473" y="859.16" width="253.4" height="3.63" fill="url(#cs36)"/>
<rect x="473" y="862.19" width="253.4" height="3.63" fill="url(#cs37)"/>
<rect x="473" y="865.21" width="253.4" height="3.63" fill="url(#cs38)"/>
<rect x="473" y="868.24" width="253.4" height="3.63" fill="url(#cs39)"/>
<rect x="473" y="871.27" width="253.4" height="3.63" fill="url(#cs40)"/>
<rect x="473" y="874.29" width="253.4" height="3.63" fill="url(#cs41)"/>
<rect x="473" y="877.32" width="253.4" height="3.63" fill="url(#cs42)"/>
<rect x="473" y="880.35" width="253.4" height="3.63" fill="url(#cs43)"/>
<rect x="473" y="883.37" width="253.4" height="3.63" fill="url(#cs44)"/>
<rect x="473" y="886.4" width="253.4" height="3.63" fill="url(#cs45)"/>
<rect x="473" y="889.43" width="253.4" height="3.63" fill="url(#cs46)"/>
<rect x="473" y="892.45" width="253.4" height="3.63" fill="url(#cs47)"/>
<rect x="473" y="895.48" width="253.4" height="3.63" fill="url(#cs48)"/>
<rect x="473" y="898.51" width="253.4" height="3.63" fill="url(#cs49)"/>
<rect x="473" y="901.53" width="253.4" height="3.63" fill="url(#cs50)"/>
<rect x="473" y="904.56" width="253.4" height="3.63" fill="url(#cs51)"/>
<rect x="473" y="907.59" width="253.4" height="3.63" fill="url(#cs52)"/>
<rect x="473" y="910.61" width="253.4" height="3.63" fill="url(#cs53)"/>
<rect x="473" y="913.64" width="253.4" height="3.63" fill="url(#cs54)"/>
<rect x="473" y="916.67" width="253.4" height="3.63" fill="url(#cs55)"/>
<rect x="473" y="919.69" width="253.4" height="3.63" fill="url(#cs56)"/>
<rect x="473" y="922.72" width="253.4" height="3.63" fill="url(#cs57)"/>
<rect x="473" y="925.75" width="253.4" height="3.63" fill="url(#cs58)"/>
<rect x="473" y="928.77" width="253.4" height="3.63" fill="url(#cs59)"/>
<line x1="465.6" y1="763.3" x2="472" y2="763.3" stroke="#d8d8d8" stroke-width="1.3"/>
<text x="464.8" y="768.0" font-size="15.3" fill="#dcdcdc" textLength="29.6" lengthAdjust="spacingAndGlyphs" text-anchor="end">0,35</text>
<line x1="465.6" y1="800.0" x2="472" y2="800.0" stroke="#d8d8d8" stroke-width="1.3"/>
<text x="464.8" y="804.7" font-size="15.3" fill="#dcdcdc" textLength="29.6" lengthAdjust="spacingAndGlyphs" text-anchor="end">0,34</text>
<line x1="465.6" y1="836.7" x2="472" y2="836.7" stroke="#d8d8d8" stroke-width="1.3"/>
<text x="464.8" y="841.4000000000001" font-size="15.3" fill="#dcdcdc" textLength="29.6" lengthAdjust="spacingAndGlyphs" text-anchor="end">0,33</text>
<line x1="465.6" y1="873.4" x2="472" y2="873.4" stroke="#d8d8d8" stroke-width="1.3"/>
<text x="464.8" y="878.1" font-size="15.3" fill="#dcdcdc" textLength="29.6" lengthAdjust="spacingAndGlyphs" text-anchor="end">0,32</text>
<line x1="465.6" y1="910.1" x2="472" y2="910.1" stroke="#d8d8d8" stroke-width="1.3"/>
<text x="464.8" y="914.8000000000001" font-size="15.3" fill="#dcdcdc" textLength="29.6" lengthAdjust="spacingAndGlyphs" text-anchor="end">0,31</text>
<line x1="482.3" y1="932.5" x2="482.3" y2="938.5" stroke="#d8d8d8" stroke-width="1.3"/>
<text x="482.3" y="953.9" font-size="15.3" fill="#dcdcdc" textLength="29.6" lengthAdjust="spacingAndGlyphs" text-anchor="middle">0,29</text>
<line x1="533.0" y1="932.5" x2="533.0" y2="938.5" stroke="#d8d8d8" stroke-width="1.3"/>
<text x="533.0" y="953.9" font-size="15.3" fill="#dcdcdc" textLength="21.3" lengthAdjust="spacingAndGlyphs" text-anchor="middle">0,3</text>
<line x1="583.7" y1="932.5" x2="583.7" y2="938.5" stroke="#d8d8d8" stroke-width="1.3"/>
<text x="583.7" y="953.9" font-size="15.3" fill="#dcdcdc" textLength="29.6" lengthAdjust="spacingAndGlyphs" text-anchor="middle">0,31</text>
<line x1="634.4" y1="932.5" x2="634.4" y2="938.5" stroke="#d8d8d8" stroke-width="1.3"/>
<text x="634.4" y="953.9" font-size="15.3" fill="#dcdcdc" textLength="29.6" lengthAdjust="spacingAndGlyphs" text-anchor="middle">0,32</text>
<line x1="685.1" y1="932.5" x2="685.1" y2="938.5" stroke="#d8d8d8" stroke-width="1.3"/>
<text x="685.1" y="953.9" font-size="15.3" fill="#dcdcdc" textLength="29.6" lengthAdjust="spacingAndGlyphs" text-anchor="middle">0,33</text>
<clipPath id="cpc"><rect x="473" y="750.2" width="252.4" height="181.4"/></clipPath>
<polyline points="497.5,938.7 507.2,931.0 516.9,923.4 526.7,915.8 536.4,908.4 546.1,901.0 555.8,893.7 565.5,886.5 575.3,879.4 585.0,872.3 594.7,865.3 604.4,858.4 614.1,851.6 623.8,844.9 633.6,838.3 643.3,831.7 653.0,825.2 662.7,818.8 672.4,812.4 682.1,806.2 691.9,800.0 701.6,793.9 711.3,787.8 721.0,781.9 730.7,776.0" fill="none" stroke="#050505" stroke-width="3.3" stroke-linejoin="round" stroke-linecap="butt" clip-path="url(#cpc)"/>
<rect x="590.9" y="833" width="14.2" height="13.9" fill="none" stroke="#0c0c0c" stroke-width="1.7"/>
<circle cx="582.1" cy="834.0" r="4.4" fill="#2a2a2a" stroke="#1c1c1c" stroke-width="0.9"/>
<circle cx="612.2" cy="829.7" r="4.4" fill="#3e3e3e" stroke="#1c1c1c" stroke-width="0.9"/>
<circle cx="607.6" cy="835.0" r="4.4" fill="#565656" stroke="#1c1c1c" stroke-width="0.9"/>
<circle cx="595.6" cy="833.3" r="4.4" fill="#727272" stroke="#1c1c1c" stroke-width="0.9"/>
<circle cx="598.5" cy="838.4" r="4.4" fill="#6e6e6e" stroke="#1c1c1c" stroke-width="0.9"/>
<circle cx="603.5" cy="833.5" r="4.4" fill="#8a8a8a" stroke="#1c1c1c" stroke-width="0.9"/>
<circle cx="600.0" cy="833.0" r="4.4" fill="#a0a0a0" stroke="#1c1c1c" stroke-width="0.9"/>
<circle cx="601.3" cy="832.5" r="4.4" fill="#b8b8b8" stroke="#1c1c1c" stroke-width="0.9"/>
<circle cx="601.0" cy="831.2" r="4.4" fill="#d0d0d0" stroke="#1c1c1c" stroke-width="0.9"/>
<circle cx="601.8" cy="830.0" r="4.4" fill="#e6e6e6" stroke="#1c1c1c" stroke-width="0.9"/>
<circle cx="602.8" cy="828.5" r="4.4" fill="#ffffff" stroke="#1c1c1c" stroke-width="0.9"/>
<text x="902.8" y="746" font-size="16.2" fill="#ffffff" textLength="9.1" lengthAdjust="spacingAndGlyphs">0</text>
<text x="982.7" y="746" font-size="16.2" fill="#ffffff" textLength="18.2" lengthAdjust="spacingAndGlyphs">10</text>
<text x="1052.88" y="746" font-size="16.2" fill="#ffffff" textLength="18.2" lengthAdjust="spacingAndGlyphs">20</text>
<text x="1123.06" y="746" font-size="16.2" fill="#ffffff" textLength="18.2" lengthAdjust="spacingAndGlyphs">30</text>
<text x="1193.24" y="746" font-size="16.2" fill="#ffffff" textLength="18.2" lengthAdjust="spacingAndGlyphs">40</text>
<text x="1263.42" y="746" font-size="16.2" fill="#ffffff" textLength="18.2" lengthAdjust="spacingAndGlyphs">50</text>
<text x="1333.6000000000001" y="746" font-size="16.2" fill="#ffffff" textLength="18.2" lengthAdjust="spacingAndGlyphs">60</text>
<text x="1403.7800000000002" y="746" font-size="16.2" fill="#ffffff" textLength="18.2" lengthAdjust="spacingAndGlyphs">70</text>
<text x="1473.96" y="746" font-size="16.2" fill="#ffffff" textLength="18.2" lengthAdjust="spacingAndGlyphs">80</text>
<text x="1544.14" y="746" font-size="16.2" fill="#ffffff" textLength="18.2" lengthAdjust="spacingAndGlyphs">90</text>
<text x="1614.3200000000002" y="746" font-size="16.2" fill="#ffffff" textLength="27.3" lengthAdjust="spacingAndGlyphs">100</text>
<text x="764" y="775.0" font-size="16.2" fill="#ffffff" textLength="58.6" lengthAdjust="spacingAndGlyphs">x: CIE31</text>
<text x="902.8" y="775.0" font-size="16.2" fill="#ffffff" textLength="31.3" lengthAdjust="spacingAndGlyphs">0,27</text>
<text x="982.7" y="775.0" font-size="16.2" fill="#ffffff" textLength="31.3" lengthAdjust="spacingAndGlyphs">0,31</text>
<text x="1052.88" y="775.0" font-size="16.2" fill="#ffffff" textLength="31.3" lengthAdjust="spacingAndGlyphs">0,32</text>
<text x="1123.06" y="775.0" font-size="16.2" fill="#ffffff" textLength="31.3" lengthAdjust="spacingAndGlyphs">0,31</text>
<text x="1193.24" y="775.0" font-size="16.2" fill="#ffffff" textLength="31.3" lengthAdjust="spacingAndGlyphs">0,31</text>
<text x="1263.42" y="775.0" font-size="16.2" fill="#ffffff" textLength="31.3" lengthAdjust="spacingAndGlyphs">0,31</text>
<text x="1333.6000000000001" y="775.0" font-size="16.2" fill="#ffffff" textLength="31.3" lengthAdjust="spacingAndGlyphs">0,31</text>
<text x="1403.7800000000002" y="775.0" font-size="16.2" fill="#ffffff" textLength="31.3" lengthAdjust="spacingAndGlyphs">0,31</text>
<text x="1473.96" y="775.0" font-size="16.2" fill="#ffffff" textLength="31.3" lengthAdjust="spacingAndGlyphs">0,31</text>
<text x="1544.14" y="775.0" font-size="16.2" fill="#ffffff" textLength="31.3" lengthAdjust="spacingAndGlyphs">0,31</text>
<text x="1614.3200000000002" y="775.0" font-size="16.2" fill="#ffffff" textLength="31.3" lengthAdjust="spacingAndGlyphs">0,31</text>
<text x="764" y="802.5" font-size="16.2" fill="#ececec" textLength="58.6" lengthAdjust="spacingAndGlyphs">y: CIE31</text>
<text x="902.8" y="802.5" font-size="16.2" fill="#ececec" textLength="31.3" lengthAdjust="spacingAndGlyphs">0,28</text>
<text x="982.7" y="802.5" font-size="16.2" fill="#ececec" textLength="31.3" lengthAdjust="spacingAndGlyphs">0,33</text>
<text x="1052.88" y="802.5" font-size="16.2" fill="#ececec" textLength="31.3" lengthAdjust="spacingAndGlyphs">0,33</text>
<text x="1123.06" y="802.5" font-size="16.2" fill="#ececec" textLength="31.3" lengthAdjust="spacingAndGlyphs">0,33</text>
<text x="1193.24" y="802.5" font-size="16.2" fill="#ececec" textLength="31.3" lengthAdjust="spacingAndGlyphs">0,33</text>
<text x="1263.42" y="802.5" font-size="16.2" fill="#ececec" textLength="31.3" lengthAdjust="spacingAndGlyphs">0,33</text>
<text x="1333.6000000000001" y="802.5" font-size="16.2" fill="#ececec" textLength="31.3" lengthAdjust="spacingAndGlyphs">0,33</text>
<text x="1403.7800000000002" y="802.5" font-size="16.2" fill="#ececec" textLength="31.3" lengthAdjust="spacingAndGlyphs">0,33</text>
<text x="1473.96" y="802.5" font-size="16.2" fill="#ececec" textLength="31.3" lengthAdjust="spacingAndGlyphs">0,33</text>
<text x="1544.14" y="802.5" font-size="16.2" fill="#ececec" textLength="31.3" lengthAdjust="spacingAndGlyphs">0,33</text>
<text x="1614.3200000000002" y="802.5" font-size="16.2" fill="#ececec" textLength="31.3" lengthAdjust="spacingAndGlyphs">0,33</text>
<text x="764" y="830.0" font-size="16.2" fill="#ffffff" textLength="9.8" lengthAdjust="spacingAndGlyphs">Y</text>
<text x="902.8" y="830.0" font-size="16.2" fill="#ffffff" textLength="31.3" lengthAdjust="spacingAndGlyphs">0,37</text>
<text x="982.7" y="830.0" font-size="16.2" fill="#ffffff" textLength="31.3" lengthAdjust="spacingAndGlyphs">3,72</text>
<text x="1052.88" y="830.0" font-size="16.2" fill="#ffffff" textLength="40.4" lengthAdjust="spacingAndGlyphs">14,84</text>
<text x="1123.06" y="830.0" font-size="16.2" fill="#ffffff" textLength="40.4" lengthAdjust="spacingAndGlyphs">34,93</text>
<text x="1193.24" y="830.0" font-size="16.2" fill="#ffffff" textLength="40.4" lengthAdjust="spacingAndGlyphs">65,74</text>
<text x="1263.42" y="830.0" font-size="16.2" fill="#ffffff" textLength="49.5" lengthAdjust="spacingAndGlyphs">108,55</text>
<text x="1333.6000000000001" y="830.0" font-size="16.2" fill="#ffffff" textLength="49.5" lengthAdjust="spacingAndGlyphs">162,00</text>
<text x="1403.7800000000002" y="830.0" font-size="16.2" fill="#ffffff" textLength="49.5" lengthAdjust="spacingAndGlyphs">227,67</text>
<text x="1473.96" y="830.0" font-size="16.2" fill="#ffffff" textLength="49.5" lengthAdjust="spacingAndGlyphs">308,76</text>
<text x="1544.14" y="830.0" font-size="16.2" fill="#ffffff" textLength="49.5" lengthAdjust="spacingAndGlyphs">404,43</text>
<text x="1614.3200000000002" y="830.0" font-size="16.2" fill="#ffffff" textLength="49.5" lengthAdjust="spacingAndGlyphs">515,57</text>
<text x="764" y="857.5" font-size="16.2" fill="#ececec" textLength="61.4" lengthAdjust="spacingAndGlyphs">Target Y</text>
<text x="902.8" y="857.5" font-size="16.2" fill="#ececec" textLength="31.3" lengthAdjust="spacingAndGlyphs">0,00</text>
<text x="982.7" y="857.5" font-size="16.2" fill="#ececec" textLength="31.3" lengthAdjust="spacingAndGlyphs">5,33</text>
<text x="1052.88" y="857.5" font-size="16.2" fill="#ececec" textLength="40.4" lengthAdjust="spacingAndGlyphs">17,07</text>
<text x="1123.06" y="857.5" font-size="16.2" fill="#ececec" textLength="40.4" lengthAdjust="spacingAndGlyphs">37,26</text>
<text x="1193.24" y="857.5" font-size="16.2" fill="#ececec" textLength="40.4" lengthAdjust="spacingAndGlyphs">68,50</text>
<text x="1263.42" y="857.5" font-size="16.2" fill="#ececec" textLength="49.5" lengthAdjust="spacingAndGlyphs">111,29</text>
<text x="1333.6000000000001" y="857.5" font-size="16.2" fill="#ececec" textLength="49.5" lengthAdjust="spacingAndGlyphs">164,23</text>
<text x="1403.7800000000002" y="857.5" font-size="16.2" fill="#ececec" textLength="49.5" lengthAdjust="spacingAndGlyphs">229,53</text>
<text x="1473.96" y="857.5" font-size="16.2" fill="#ececec" textLength="49.5" lengthAdjust="spacingAndGlyphs">311,32</text>
<text x="1544.14" y="857.5" font-size="16.2" fill="#ececec" textLength="49.5" lengthAdjust="spacingAndGlyphs">407,97</text>
<text x="1614.3200000000002" y="857.5" font-size="16.2" fill="#ececec" textLength="49.5" lengthAdjust="spacingAndGlyphs">515,57</text>
<text x="764" y="885.0" font-size="16.2" fill="#ffffff" textLength="128" lengthAdjust="spacingAndGlyphs">Gamma Log/Log</text>
<text x="902.8" y="885.0" font-size="16.2" fill="#ffffff" textLength="31.3" lengthAdjust="spacingAndGlyphs">1,28</text>
<text x="982.7" y="885.0" font-size="16.2" fill="#ffffff" textLength="31.3" lengthAdjust="spacingAndGlyphs">2,16</text>
<text x="1052.88" y="885.0" font-size="16.2" fill="#ffffff" textLength="31.3" lengthAdjust="spacingAndGlyphs">2,20</text>
<text x="1123.06" y="885.0" font-size="16.2" fill="#ffffff" textLength="31.3" lengthAdjust="spacingAndGlyphs">2,22</text>
<text x="1193.24" y="885.0" font-size="16.2" fill="#ffffff" textLength="31.3" lengthAdjust="spacingAndGlyphs">2,25</text>
<text x="1263.42" y="885.0" font-size="16.2" fill="#ffffff" textLength="31.3" lengthAdjust="spacingAndGlyphs">2,26</text>
<text x="1333.6000000000001" y="885.0" font-size="16.2" fill="#ffffff" textLength="31.3" lengthAdjust="spacingAndGlyphs">2,27</text>
<text x="1403.7800000000002" y="885.0" font-size="16.2" fill="#ffffff" textLength="31.3" lengthAdjust="spacingAndGlyphs">2,27</text>
<text x="1473.96" y="885.0" font-size="16.2" fill="#ffffff" textLength="31.3" lengthAdjust="spacingAndGlyphs">2,30</text>
<text x="1544.14" y="885.0" font-size="16.2" fill="#ffffff" textLength="31.3" lengthAdjust="spacingAndGlyphs">2,35</text>
<text x="1614.3200000000002" y="885.0" font-size="16.2" fill="#ffffff" textLength="31.3" lengthAdjust="spacingAndGlyphs">2,27</text>
<text x="764" y="912.5" font-size="16.2" fill="#ececec" textLength="29.3" lengthAdjust="spacingAndGlyphs">CCT</text>
<text x="902.8" y="912.5" font-size="16.2" fill="#ececec" textLength="67.7" lengthAdjust="spacingAndGlyphs">10893,00</text>
<text x="982.7" y="912.5" font-size="16.2" fill="#ececec" textLength="58.6" lengthAdjust="spacingAndGlyphs">6664,00</text>
<text x="1052.88" y="912.5" font-size="16.2" fill="#ececec" textLength="58.6" lengthAdjust="spacingAndGlyphs">6351,00</text>
<text x="1123.06" y="912.5" font-size="16.2" fill="#ececec" textLength="58.6" lengthAdjust="spacingAndGlyphs">6392,00</text>
<text x="1193.24" y="912.5" font-size="16.2" fill="#ececec" textLength="58.6" lengthAdjust="spacingAndGlyphs">6503,00</text>
<text x="1263.42" y="912.5" font-size="16.2" fill="#ececec" textLength="58.6" lengthAdjust="spacingAndGlyphs">6497,00</text>
<text x="1333.6000000000001" y="912.5" font-size="16.2" fill="#ececec" textLength="58.6" lengthAdjust="spacingAndGlyphs">6435,00</text>
<text x="1403.7800000000002" y="912.5" font-size="16.2" fill="#ececec" textLength="58.6" lengthAdjust="spacingAndGlyphs">6439,00</text>
<text x="1473.96" y="912.5" font-size="16.2" fill="#ececec" textLength="58.6" lengthAdjust="spacingAndGlyphs">6457,00</text>
<text x="1544.14" y="912.5" font-size="16.2" fill="#ececec" textLength="58.6" lengthAdjust="spacingAndGlyphs">6447,00</text>
<text x="1614.3200000000002" y="912.5" font-size="16.2" fill="#ececec" textLength="58.6" lengthAdjust="spacingAndGlyphs">6432,00</text>
<text x="764" y="940.0" font-size="16.2" fill="#ffffff" textLength="61.8" lengthAdjust="spacingAndGlyphs">ΔE 2000</text>
<text x="902.8" y="940.0" font-size="16.2" fill="#ffffff" textLength="31.3" lengthAdjust="spacingAndGlyphs">0,61</text>
<text x="982.7" y="940.0" font-size="16.2" fill="#ffffff" textLength="31.3" lengthAdjust="spacingAndGlyphs">1,78</text>
<text x="1052.88" y="940.0" font-size="16.2" fill="#ffffff" textLength="31.3" lengthAdjust="spacingAndGlyphs">1,26</text>
<text x="1123.06" y="940.0" font-size="16.2" fill="#ffffff" textLength="31.3" lengthAdjust="spacingAndGlyphs">0,91</text>
<text x="1193.24" y="940.0" font-size="16.2" fill="#ffffff" textLength="31.3" lengthAdjust="spacingAndGlyphs">0,77</text>
<text x="1263.42" y="940.0" font-size="16.2" fill="#ffffff" textLength="31.3" lengthAdjust="spacingAndGlyphs">1,13</text>
<text x="1333.6000000000001" y="940.0" font-size="16.2" fill="#ffffff" textLength="31.3" lengthAdjust="spacingAndGlyphs">0,83</text>
<text x="1403.7800000000002" y="940.0" font-size="16.2" fill="#ffffff" textLength="31.3" lengthAdjust="spacingAndGlyphs">1,23</text>
<text x="1473.96" y="940.0" font-size="16.2" fill="#ffffff" textLength="31.3" lengthAdjust="spacingAndGlyphs">1,29</text>
<text x="1544.14" y="940.0" font-size="16.2" fill="#ffffff" textLength="31.3" lengthAdjust="spacingAndGlyphs">1,51</text>
<text x="1614.3200000000002" y="940.0" font-size="16.2" fill="#ffffff" textLength="31.3" lengthAdjust="spacingAndGlyphs">1,98</text>
<text x="70.3" y="1033.6" font-size="12" fill="#242424" textLength="6.9" lengthAdjust="spacingAndGlyphs" font-weight="bold" text-anchor="middle" stroke="#242424" stroke-width="0.3">0</text>
<text x="212.3" y="1033.6" font-size="12" fill="#242424" textLength="13.8" lengthAdjust="spacingAndGlyphs" font-weight="bold" text-anchor="middle" stroke="#242424" stroke-width="0.3">10</text>
<text x="354.3" y="1033.6" font-size="12" fill="#242424" textLength="13.8" lengthAdjust="spacingAndGlyphs" font-weight="bold" text-anchor="middle" stroke="#242424" stroke-width="0.3">20</text>
<text x="496.3" y="1033.6" font-size="12" fill="#242424" textLength="13.8" lengthAdjust="spacingAndGlyphs" font-weight="bold" text-anchor="middle" stroke="#242424" stroke-width="0.3">30</text>
<text x="638.3" y="1033.6" font-size="12" fill="#242424" textLength="13.8" lengthAdjust="spacingAndGlyphs" font-weight="bold" text-anchor="middle" stroke="#242424" stroke-width="0.3">40</text>
<text x="780.3" y="1033.6" font-size="12" fill="#242424" textLength="13.8" lengthAdjust="spacingAndGlyphs" font-weight="bold" text-anchor="middle" stroke="#242424" stroke-width="0.3">50</text>
<text x="922.3" y="1033.6" font-size="12" fill="#242424" textLength="13.8" lengthAdjust="spacingAndGlyphs" font-weight="bold" text-anchor="middle" stroke="#242424" stroke-width="0.3">60</text>
<text x="1064.3" y="1033.6" font-size="12" fill="#242424" textLength="13.8" lengthAdjust="spacingAndGlyphs" font-weight="bold" text-anchor="middle" stroke="#242424" stroke-width="0.3">70</text>
<text x="1206.3" y="1033.6" font-size="12" fill="#242424" textLength="13.8" lengthAdjust="spacingAndGlyphs" font-weight="bold" text-anchor="middle" stroke="#242424" stroke-width="0.3">80</text>
<text x="1348.3" y="1033.6" font-size="12" fill="#242424" textLength="13.8" lengthAdjust="spacingAndGlyphs" font-weight="bold" text-anchor="middle" stroke="#242424" stroke-width="0.3">90</text>
<text x="1490.3" y="1033.6" font-size="12" fill="#ffffff" textLength="20.5" lengthAdjust="spacingAndGlyphs" font-weight="bold" text-anchor="middle">100</text>
<path d="M1587 982h9l-4.5-4.5z" fill="#2c2c2c"/>
<rect x="1642.0" y="982.5" width="8" height="8" fill="#262626"/>
<path d="M1693.7 981.5v10l8.5-5z" fill="#262626"/>
<path d="M1745.4 981.5h-2.5v10h2.5M1751.4 981.5h2.5v10h-2.5" fill="none" stroke="#262626" stroke-width="1.5"/><path d="M1745.9 986.5h1.3M1747.8000000000002 986.5h1.3M1749.7 986.5h1.3" stroke="#262626" stroke-width="1.4"/>
<path d="M1799.6 986.5c-2-3.6-6.5-3.6-6.5 0s4.5 3.6 6.5 0s6.5-3.6 6.5 0s-4.500 3.6-6.5 0z" fill="none" stroke="#262626" stroke-width="1.7"/>
<g transform="translate(1850.8,986.5)" fill="none" stroke="#262626" stroke-width="1.9"><path d="M-5.2 -1.2a5.4 5.4 0 0 1 9.2 -2.6"/><path d="M5.2 1.2a5.4 5.4 0 0 1 -9.2 2.6"/></g><path d="M1857.3 980.0v5h-5z M1844.3 993.0v-5h5z" fill="#262626"/>
<path d="M1653.5 1017l-4 5 4 5M1659 1017l-4 5 4 5" fill="none" stroke="#2c2c2c" stroke-width="1.6"/>
<path d="M1893.500 1017l4 5-4 5M1899 1017l4 5-4 5" fill="none" stroke="#2c2c2c" stroke-width="1.6"/>
<text x="1685" y="1031.5" font-size="25" fill="#2a2a2a" textLength="57" lengthAdjust="spacingAndGlyphs" stroke="#2a2a2a" stroke-width="0.5">Back</text>
<text x="1805.5" y="1031.5" font-size="25" fill="#2a2a2a" textLength="58.5" lengthAdjust="spacingAndGlyphs" stroke="#2a2a2a" stroke-width="0.5">Next</text>
</svg>
</div>
</body></html>
